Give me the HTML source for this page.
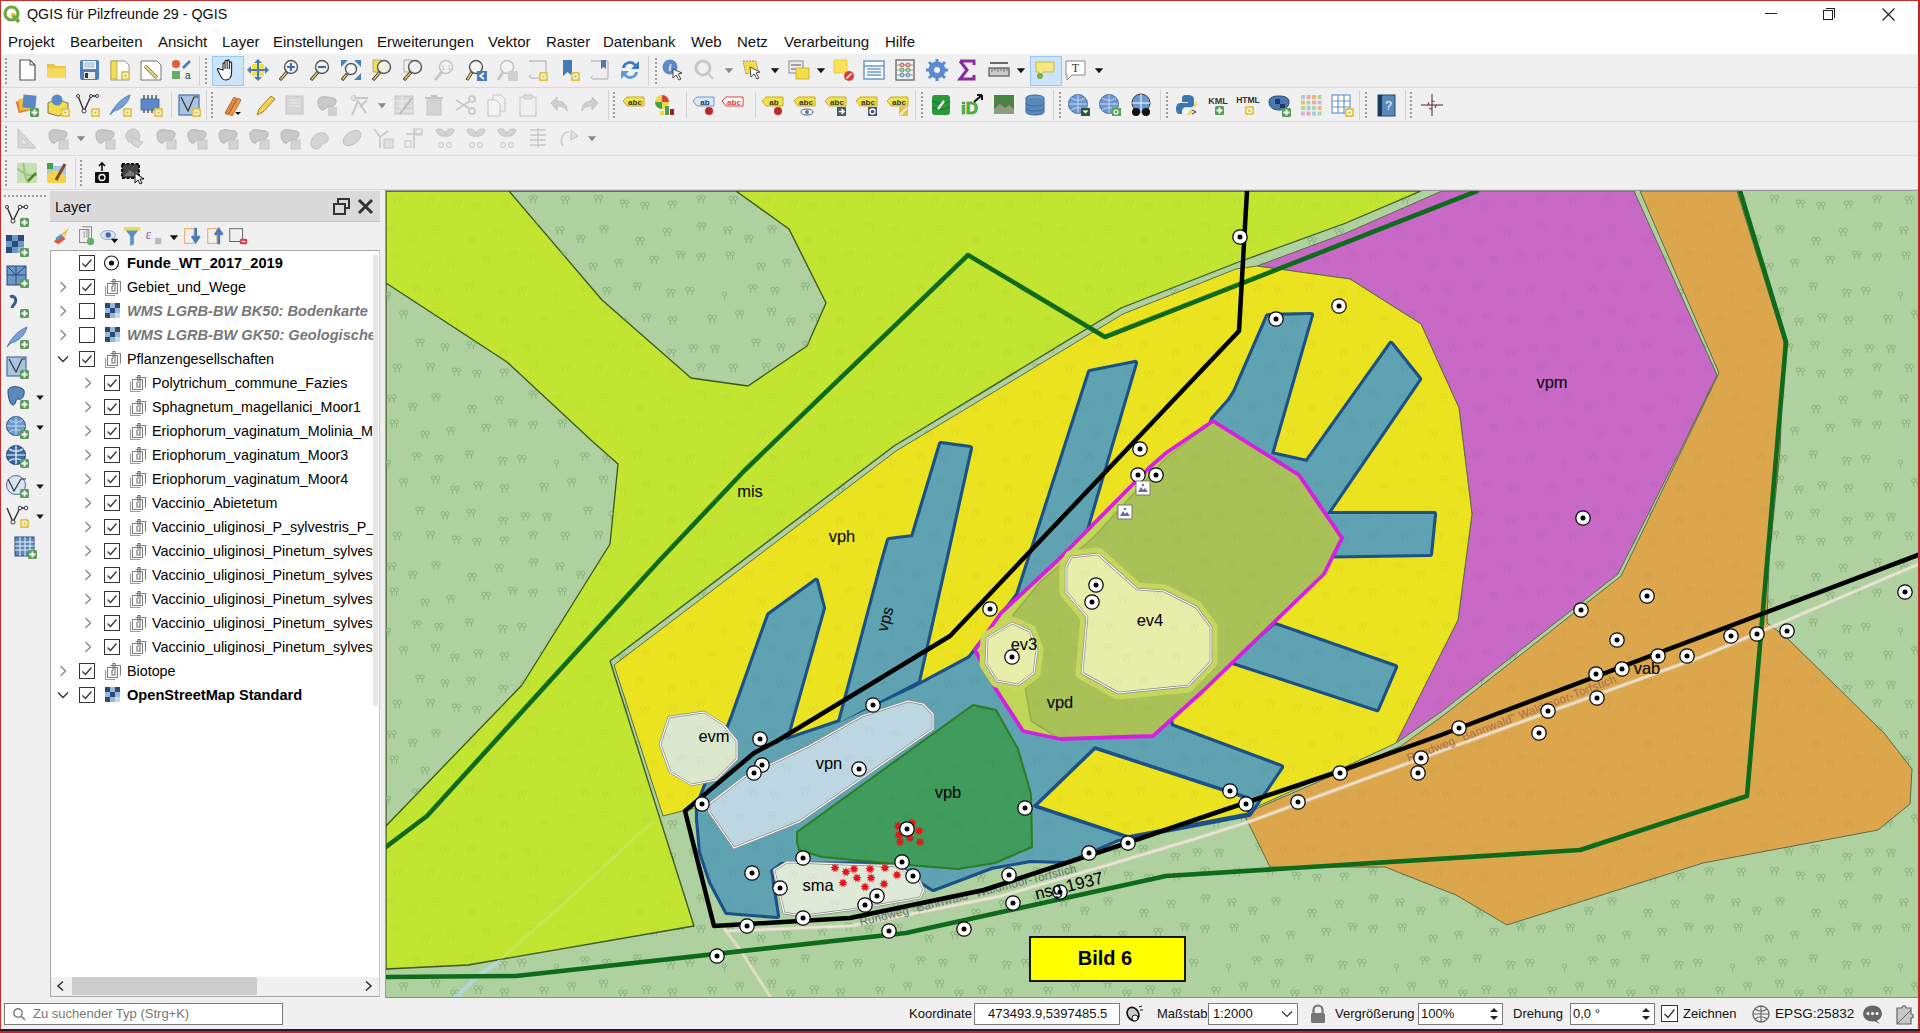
<!DOCTYPE html>
<html><head><meta charset="utf-8">
<style>
*{margin:0;padding:0;box-sizing:border-box}
html,body{width:1920px;height:1033px;overflow:hidden;background:#f0f0f0;font-family:"Liberation Sans",sans-serif;color:#000}
.a{position:absolute}
#title{left:0;top:0;width:1920px;height:28px;background:#fff;border-top:1px solid #c42b2b}
#menu{left:0;top:28px;width:1920px;height:26px;background:#fff}
#menu span{position:absolute;top:5px;font-size:15px;color:#111}
.tb{position:absolute;left:1px;width:1917px;background:#f0f0f0;border-bottom:1px solid #d9d9d9}
.grip{position:absolute;width:3px;border-left:2px dotted #a9a9a9}
.sep{position:absolute;width:1px;background:#d5d5d5}
.lt span{position:absolute;font-size:14.4px;white-space:nowrap}
#status span{position:absolute;font-size:13px;white-space:nowrap}
</style></head>
<body>
<!-- window borders -->
<div class="a" style="left:0;top:0;width:1px;height:1033px;background:#c9302c;z-index:50"></div>
<div class="a" style="left:1918px;top:0;width:2px;height:1033px;background:#b82828;z-index:50"></div>
<div class="a" style="left:0;top:0;width:1920px;height:1px;background:#c9302c;z-index:50"></div>
<div class="a" style="left:0;top:1029px;width:1920px;height:2px;background:#211c2e;z-index:50"></div>
<div class="a" style="left:0;top:1031px;width:1920px;height:2px;background:#c8202a;z-index:50"></div>

<div id="title" class="a">
  <svg class="a" style="left:3px;top:4px" width="18" height="19" viewBox="0 0 18 19">
    <circle cx="8.5" cy="8.5" r="6.5" fill="none" stroke="#6fa83b" stroke-width="3.2"/>
    <path d="M9 9 L16 17" stroke="#6fa83b" stroke-width="3.5"/>
    <circle cx="9.5" cy="9.5" r="1.8" fill="#f0c030"/>
  </svg>
  <div class="a" style="left:27px;top:5px;font-size:14.3px;color:#111">QGIS für Pilzfreunde 29 - QGIS</div>
  <div class="a" style="left:1765px;top:12px;width:12px;height:1px;background:#222"></div>
  <div class="a" style="left:1823px;top:9px;width:10px;height:10px;border:1px solid #222;background:#fff"></div>
  <div class="a" style="left:1826px;top:7px;width:9px;height:10px;border-top:1px solid #222;border-right:1px solid #222"></div>
  <svg class="a" style="left:1882px;top:7px" width="13" height="13"><path d="M0.5 0.5L12.5 12.5M12.5 0.5L0.5 12.5" stroke="#222" stroke-width="1.2"/></svg>
</div>

<div id="menu" class="a">
  <span style="left:8px">Projekt</span>
  <span style="left:70px">Bearbeiten</span>
  <span style="left:158px">Ansicht</span>
  <span style="left:222px">Layer</span>
  <span style="left:273px">Einstellungen</span>
  <span style="left:377px">Erweiterungen</span>
  <span style="left:488px">Vektor</span>
  <span style="left:546px">Raster</span>
  <span style="left:603px">Datenbank</span>
  <span style="left:691px">Web</span>
  <span style="left:737px">Netz</span>
  <span style="left:784px">Verarbeitung</span>
  <span style="left:885px">Hilfe</span>
</div>

<!-- toolbars -->
<div class="tb" style="top:54px;height:34px"></div>
<div class="tb" style="top:88px;height:34px"></div>
<div class="tb" style="top:122px;height:34px"></div>
<div class="tb" style="top:156px;height:34px"></div>
<div class="a" style="left:5px;top:58px;width:2px;height:26px;background:repeating-linear-gradient(to bottom,#9d9d9d 0 2px,transparent 2px 4px)"></div><svg class="a" style="left:15.0px;top:58.0px" width="24" height="24" viewBox="0 0 24 24" font-family="Liberation Sans"><path d="M5 2h10l5 5v15H5z" fill="#fff" stroke="#555" stroke-width="1.2"/><path d="M15 2v5h5" fill="none" stroke="#555" stroke-width="1"/></svg><svg class="a" style="left:45.0px;top:58.0px" width="24" height="24" viewBox="0 0 24 24" font-family="Liberation Sans"><path d="M2 6h7l2 2h10v12H2z" fill="#e8c64a"/><path d="M2 10h19l-1 10H2z" fill="#f6d95a"/></svg><svg class="a" style="left:77.0px;top:58.0px" width="24" height="24" viewBox="0 0 24 24" font-family="Liberation Sans"><rect x="3" y="2" width="19" height="20" rx="2" fill="#4f80b8"/><rect x="6" y="3" width="13" height="8" fill="#fff"/><path d="M7 5h11M7 7h11M7 9h11" stroke="#6b8fb8" stroke-width="0.8"/><rect x="7" y="14" width="11" height="7" fill="#e8e8e8"/><rect x="8" y="15" width="3" height="5" fill="#333"/></svg><svg class="a" style="left:108.0px;top:58.0px" width="24" height="24" viewBox="0 0 24 24" font-family="Liberation Sans"><path d="M3 3h14l4 4v15H3z" fill="#fff" stroke="#999" stroke-width="1"/><rect x="3" y="3" width="6" height="18" fill="#f2dc5a" stroke="#c9a92a" stroke-width="0.8"/><rect x="13" y="13" width="9" height="9" rx="1.5" fill="#e3c44a"/><circle cx="17.5" cy="17.5" r="2.2" fill="none" stroke="#fff" stroke-width="1.3"/></svg><svg class="a" style="left:139.0px;top:58.0px" width="24" height="24" viewBox="0 0 24 24" font-family="Liberation Sans"><path d="M2 3h16l4 4v15H2z" fill="#fff" stroke="#777" stroke-width="1"/><path d="M6 8l12 12" stroke="#7a6a3a" stroke-width="3.5"/><path d="M6 8l12 12" stroke="#e8d88a" stroke-width="2"/></svg><svg class="a" style="left:169.0px;top:58.0px" width="24" height="24" viewBox="0 0 24 24" font-family="Liberation Sans"><circle cx="7" cy="6" r="4" fill="#e06030"/><path d="M14 10l7-7" stroke="#4a7ab5" stroke-width="2.5"/><rect x="3" y="13" width="8" height="8" fill="#6aaa6a"/><text x="16" y="21" font-size="10" fill="#333" font-family="Liberation Sans">a</text></svg><div class="a" style="left:199px;top:56px;width:1px;height:30px;background:#d4d4d4"></div><div class="a" style="left:205px;top:58px;width:2px;height:26px;background:repeating-linear-gradient(to bottom,#9d9d9d 0 2px,transparent 2px 4px)"></div><div class="a" style="left:212px;top:56px;width:32px;height:30px;background:#cce4f7;border:1px solid #99c9ef"></div><svg class="a" style="left:216.0px;top:58.0px" width="24" height="24" viewBox="0 0 24 24" font-family="Liberation Sans"><path d="M7 12V6c0-1.5 2-1.5 2 0v5V3.5c0-1.5 2.2-1.5 2.2 0V11V3c0-1.5 2.2-1.5 2.2 0v8V5c0-1.5 2.2-1.5 2.2 0v9c0 5-2 8-6 8-3 0-4-2-6-6l-2-4c-.7-1.5 1-2 2-1z" fill="#fff" stroke="#222" stroke-width="1.1"/></svg><svg class="a" style="left:246.0px;top:58.0px" width="24" height="24" viewBox="0 0 24 24" font-family="Liberation Sans"><rect x="6" y="6" width="12" height="12" fill="#f2e04a"/><path d="M12 1l4 4H8zM12 23l4-4H8zM1 12l4 4V8zM23 12l-4 4V8z" fill="#4a7ab5"/><path d="M12 5v14M5 12h14" stroke="#4a7ab5" stroke-width="2"/></svg><svg class="a" style="left:277.0px;top:58.0px" width="24" height="24" viewBox="0 0 24 24" font-family="Liberation Sans"><path d="M3 22L10 14" stroke="#222" stroke-width="3.2"/><path d="M3.5 21.5L9.5 14.5" stroke="#e8d26a" stroke-width="1.6"/><circle cx="14" cy="9" r="6.5" fill="#f4f4f4" stroke="#555" stroke-width="1.4"/><path d="M14 5v8M10 9h8" stroke="#3a6fb0" stroke-width="2.2"/></svg><svg class="a" style="left:308.0px;top:58.0px" width="24" height="24" viewBox="0 0 24 24" font-family="Liberation Sans"><path d="M3 22L10 14" stroke="#222" stroke-width="3.2"/><path d="M3.5 21.5L9.5 14.5" stroke="#e8d26a" stroke-width="1.6"/><circle cx="14" cy="9" r="6.5" fill="#f4f4f4" stroke="#555" stroke-width="1.4"/><path d="M10 9h8" stroke="#3a6fb0" stroke-width="2.2"/></svg><svg class="a" style="left:339.0px;top:58.0px" width="24" height="24" viewBox="0 0 24 24" font-family="Liberation Sans"><path d="M2 2h7l-7 7zM22 2h-7l7 7zM22 22h-7l7-7z" fill="#4a80c0"/><path d="M3 22L8 16" stroke="#222" stroke-width="3.2"/><path d="M3.5 21.5L7.5 16.5" stroke="#e8d26a" stroke-width="1.6"/><circle cx="12" cy="11" r="5.5" fill="#f4f4f4" stroke="#555" stroke-width="1.4"/></svg><svg class="a" style="left:370.0px;top:58.0px" width="24" height="24" viewBox="0 0 24 24" font-family="Liberation Sans"><rect x="3" y="2" width="8" height="12" fill="#f2e04a" stroke="#999" stroke-width="0.8"/><path d="M3 22L10 14" stroke="#222" stroke-width="3.2"/><path d="M3.5 21.5L9.5 14.5" stroke="#e8d26a" stroke-width="1.6"/><circle cx="14" cy="9" r="6.5" fill="#f0f0e0" stroke="#555" stroke-width="1.4"/></svg><svg class="a" style="left:401.0px;top:58.0px" width="24" height="24" viewBox="0 0 24 24" font-family="Liberation Sans"><rect x="3" y="2" width="8" height="12" fill="#eee" stroke="#999" stroke-width="0.8"/><path d="M3 22L10 14" stroke="#222" stroke-width="3.2"/><path d="M3.5 21.5L9.5 14.5" stroke="#e8d26a" stroke-width="1.6"/><circle cx="14" cy="9" r="6.5" fill="#f0f0f0" stroke="#555" stroke-width="1.4"/></svg><svg class="a" style="left:432.0px;top:58.0px" width="24" height="24" viewBox="0 0 24 24" font-family="Liberation Sans"><path d="M3 22L10 14" stroke="#c8c8c8" stroke-width="3"/><circle cx="14" cy="9" r="6.5" fill="#f4f4f4" stroke="#c0c0c0" stroke-width="1.4"/><text x="14" y="12" font-size="7" fill="#bbb" text-anchor="middle" font-family="Liberation Sans">1:1</text></svg><svg class="a" style="left:464.0px;top:58.0px" width="24" height="24" viewBox="0 0 24 24" font-family="Liberation Sans"><path d="M3 22L8 14" stroke="#222" stroke-width="3.2"/><path d="M3.5 21.5L7.5 14.5" stroke="#e8d26a" stroke-width="1.6"/><circle cx="12" cy="9" r="6.5" fill="#f4f4f4" stroke="#555" stroke-width="1.4"/><rect x="13" y="13" width="10" height="10" fill="#4a7ab5"/><path d="M20 15l-4 3 4 3" fill="none" stroke="#fff" stroke-width="1.6"/></svg><svg class="a" style="left:495.0px;top:58.0px" width="24" height="24" viewBox="0 0 24 24" font-family="Liberation Sans"><path d="M3 22L8 14" stroke="#c8c8c8" stroke-width="3"/><circle cx="12" cy="9" r="6.5" fill="#f4f4f4" stroke="#c0c0c0" stroke-width="1.4"/><rect x="13" y="13" width="10" height="10" fill="#d0d0d0"/></svg><svg class="a" style="left:526.0px;top:58.0px" width="24" height="24" viewBox="0 0 24 24" font-family="Liberation Sans"><path d="M3 3h17v17H5c-2 0-2-3 0-3" fill="#eee" stroke="#aaa" stroke-width="1"/><rect x="13" y="14" width="9" height="9" rx="1.5" fill="#e3c44a"/><circle cx="17.5" cy="18.5" r="2.2" fill="none" stroke="#fff" stroke-width="1.3"/></svg><svg class="a" style="left:558.0px;top:58.0px" width="24" height="24" viewBox="0 0 24 24" font-family="Liberation Sans"><path d="M5 2h9v16l-4.5-4L5 18z" fill="#4a7ab5"/><rect x="13" y="14" width="9" height="9" rx="1.5" fill="#e3c44a"/><circle cx="17.5" cy="18.5" r="2.2" fill="none" stroke="#fff" stroke-width="1.3"/></svg><svg class="a" style="left:588.0px;top:58.0px" width="24" height="24" viewBox="0 0 24 24" font-family="Liberation Sans"><path d="M3 3h17v18H5c-2 0-2-3 0-3" fill="#eee" stroke="#aaa" stroke-width="1"/><path d="M13 2h5v9l-2.5-2-2.5 2z" fill="#4a7ab5"/></svg><svg class="a" style="left:618.0px;top:58.0px" width="24" height="24" viewBox="0 0 24 24" font-family="Liberation Sans"><path d="M4 10a8 8 0 0 1 14-4l3-3v8h-8l3-3a5 5 0 0 0-9 2z" fill="#3a7ac8"/><path d="M20 14a8 8 0 0 1-14 4l-3 3v-8h8l-3 3a5 5 0 0 0 9-2z" fill="#5a9ad8"/></svg><div class="a" style="left:648px;top:56px;width:1px;height:30px;background:#d4d4d4"></div><div class="a" style="left:655px;top:58px;width:2px;height:26px;background:repeating-linear-gradient(to bottom,#9d9d9d 0 2px,transparent 2px 4px)"></div><div class="a" style="left:1030px;top:56px;width:32px;height:30px;background:#cce4f7;border:1px solid #99c9ef"></div><svg class="a" style="left:661.0px;top:58.0px" width="24" height="24" viewBox="0 0 24 24" font-family="Liberation Sans"><circle cx="9" cy="9" r="7.5" fill="#5a8ac8"/><text x="9" y="13" font-size="10" font-style="italic" font-weight="bold" fill="#fff" text-anchor="middle" font-family="Liberation Serif">i</text><path d="M12 11l9 4-4 1 3 5-2 1-3-5-3 3z" fill="#fff" stroke="#333" stroke-width="0.9"/></svg><svg class="a" style="left:693.0px;top:58.0px" width="24" height="24" viewBox="0 0 24 24" font-family="Liberation Sans"><circle cx="10" cy="10" r="7" fill="none" stroke="#c8c8c8" stroke-width="3"/><path d="M14 14l6 7" stroke="#ccc" stroke-width="2"/></svg><svg class="a" style="left:740.0px;top:58.0px" width="24" height="24" viewBox="0 0 24 24" font-family="Liberation Sans"><path d="M3 3h13l2 10-12 3z" fill="#f2e04a" stroke="#777" stroke-width="0.8" stroke-dasharray="2 1"/><path d="M10 9l10 5-4 1 3 5-2 1-3-5-3 3z" fill="#fff" stroke="#333" stroke-width="0.9"/></svg><svg class="a" style="left:787.0px;top:58.0px" width="24" height="24" viewBox="0 0 24 24" font-family="Liberation Sans"><rect x="2" y="3" width="14" height="12" fill="#eee" stroke="#888" stroke-width="1"/><path d="M4 7h10M4 11h10" stroke="#888" stroke-width="1.5"/><rect x="9" y="10" width="13" height="11" fill="#f2e04a" stroke="#c9a92a" stroke-width="0.8"/></svg><svg class="a" style="left:831.0px;top:58.0px" width="24" height="24" viewBox="0 0 24 24" font-family="Liberation Sans"><rect x="3" y="2" width="13" height="13" fill="#f7e25a" stroke="#e6c63a" stroke-width="0.8"/><circle cx="18" cy="18" r="5" fill="#d84040"/><path d="M15.5 20.5l5-5" stroke="#fff" stroke-width="1.5"/></svg><svg class="a" style="left:862.0px;top:58.0px" width="24" height="24" viewBox="0 0 24 24" font-family="Liberation Sans"><rect x="2" y="3" width="20" height="18" fill="#fff" stroke="#6a9ad0" stroke-width="1.5"/><path d="M2 8h20M5 11h14M5 14h14M5 17h14" stroke="#6a9ad0" stroke-width="1.3"/></svg><svg class="a" style="left:893.0px;top:58.0px" width="24" height="24" viewBox="0 0 24 24" font-family="Liberation Sans"><rect x="3" y="2" width="18" height="20" fill="none" stroke="#666" stroke-width="1.3"/><path d="M3 7h18M3 12h18M3 17h18" stroke="#888" stroke-width="0.8"/><circle cx="9" cy="7" r="2" fill="none" stroke="#d04a4a"/><circle cx="15" cy="7" r="2" fill="none" stroke="#d04a4a"/><circle cx="9" cy="12" r="2" fill="none" stroke="#4aa04a"/><circle cx="15" cy="12" r="2" fill="none" stroke="#4aa04a"/><circle cx="9" cy="17" r="2" fill="none" stroke="#4a8ab0"/><circle cx="15" cy="17" r="2" fill="none" stroke="#4a8ab0"/></svg><svg class="a" style="left:925.0px;top:58.0px" width="24" height="24" viewBox="0 0 24 24" font-family="Liberation Sans"><circle cx="12" cy="12" r="6.5" fill="none" stroke="#5a8ad0" stroke-width="4"/><path d="M12 1v22M1 12h22M4 4l16 16M20 4L4 20" stroke="#5a8ad0" stroke-width="3"/><circle cx="12" cy="12" r="3" fill="#f0f0f0"/></svg><svg class="a" style="left:955.0px;top:58.0px" width="24" height="24" viewBox="0 0 24 24" font-family="Liberation Sans"><path d="M5 3h14v4M5 3l7 9-7 9h14v-4" fill="none" stroke="#8a2aa0" stroke-width="3"/></svg><svg class="a" style="left:987.0px;top:58.0px" width="24" height="24" viewBox="0 0 24 24" font-family="Liberation Sans"><path d="M3 5h18" stroke="#444" stroke-width="1.6"/><rect x="2" y="10" width="20" height="8" fill="#ccc" stroke="#555" stroke-width="1.2"/><path d="M5 10v4M8 10v3M11 10v4M14 10v3M17 10v4M20 10v3" stroke="#555" stroke-width="0.8"/></svg><svg class="a" style="left:1033.0px;top:58.0px" width="24" height="24" viewBox="0 0 24 24" font-family="Liberation Sans"><path d="M3 4h18v10H10l-4 4v-4H3z" fill="#f4e880" stroke="#c9b84a" stroke-width="1"/><circle cx="7" cy="18" r="3" fill="#7ab04a"/></svg><svg class="a" style="left:1064.0px;top:58.0px" width="24" height="24" viewBox="0 0 24 24" font-family="Liberation Sans"><path d="M2 3h19v14H8l-5 5v-5H2z" fill="#fff" stroke="#888" stroke-width="1"/><text x="11.5" y="14" font-size="12" fill="#333" text-anchor="middle" font-family="Liberation Serif">T</text></svg><svg class="a" style="left:719.0px;top:60.0px" width="20" height="20" viewBox="0 0 24 24" font-family="Liberation Sans"><path d="M7 10h10l-5 6z" fill="#888"/></svg><svg class="a" style="left:765.0px;top:60.0px" width="20" height="20" viewBox="0 0 24 24" font-family="Liberation Sans"><path d="M7 10h10l-5 6z" fill="#111"/></svg><svg class="a" style="left:811.0px;top:60.0px" width="20" height="20" viewBox="0 0 24 24" font-family="Liberation Sans"><path d="M7 10h10l-5 6z" fill="#111"/></svg><svg class="a" style="left:1011.0px;top:60.0px" width="20" height="20" viewBox="0 0 24 24" font-family="Liberation Sans"><path d="M7 10h10l-5 6z" fill="#111"/></svg><svg class="a" style="left:1089.0px;top:60.0px" width="20" height="20" viewBox="0 0 24 24" font-family="Liberation Sans"><path d="M7 10h10l-5 6z" fill="#111"/></svg><div class="a" style="left:5px;top:92px;width:2px;height:26px;background:repeating-linear-gradient(to bottom,#9d9d9d 0 2px,transparent 2px 4px)"></div><svg class="a" style="left:15.0px;top:93.0px" width="24" height="24" viewBox="0 0 24 24" font-family="Liberation Sans"><rect x="2" y="7" width="12" height="12" fill="#e08040" transform="rotate(-15 8 13)"/><rect x="4" y="5" width="12" height="12" fill="#f0c040" transform="rotate(-8 10 11)"/><rect x="8" y="2" width="13" height="13" fill="#5a88c8" transform="rotate(5 14 8)"/><rect x="15" y="15" width="9" height="9" rx="1.5" fill="#5a9a5a"/><path d="M19.5 16.5v6M16.5 19.5h6" stroke="#fff" stroke-width="1.8"/></svg><svg class="a" style="left:46.0px;top:93.0px" width="24" height="24" viewBox="0 0 24 24" font-family="Liberation Sans"><path d="M2 10l8-4 12 4v10l-10 3-10-3z" fill="#f2dc4a" stroke="#555" stroke-width="0.8"/><circle cx="11" cy="7" r="5.5" fill="#5a88c8"/><rect x="15" y="15" width="9" height="9" rx="1.5" fill="#e3c44a"/><circle cx="19.5" cy="19.5" r="2.2" fill="none" stroke="#fff" stroke-width="1.3"/></svg><svg class="a" style="left:76.0px;top:93.0px" width="24" height="24" viewBox="0 0 24 24" font-family="Liberation Sans"><path d="M2 3l6 15 7-15h6" fill="none" stroke="#333" stroke-width="1.4"/><circle cx="8" cy="18" r="2" fill="#fff" stroke="#333"/><circle cx="2" cy="3" r="1.5" fill="#fff" stroke="#333"/><circle cx="15" cy="3" r="1.5" fill="#fff" stroke="#333"/><circle cx="21" cy="3" r="1.5" fill="#fff" stroke="#333"/><rect x="15" y="15" width="9" height="9" rx="1.5" fill="#e3c44a"/><circle cx="19.5" cy="19.5" r="2.2" fill="none" stroke="#fff" stroke-width="1.3"/></svg><svg class="a" style="left:108.0px;top:93.0px" width="24" height="24" viewBox="0 0 24 24" font-family="Liberation Sans"><path d="M2 22C6 14 12 6 22 2c-2 8-8 14-16 16z" fill="#7aa0d8" stroke="#4a70a8" stroke-width="0.9"/><rect x="15" y="15" width="9" height="9" rx="1.5" fill="#e3c44a"/><circle cx="19.5" cy="19.5" r="2.2" fill="none" stroke="#fff" stroke-width="1.3"/></svg><svg class="a" style="left:139.0px;top:93.0px" width="24" height="24" viewBox="0 0 24 24" font-family="Liberation Sans"><rect x="2" y="6" width="18" height="11" fill="#5a88c8" stroke="#3a68a8" stroke-width="0.8"/><path d="M5 2v4M9 2v4M13 2v4M17 2v4M5 17v3M9 17v3M13 17v3M17 17v3" stroke="#333" stroke-width="1.2"/><rect x="15" y="15" width="9" height="9" rx="1.5" fill="#e3c44a"/><circle cx="19.5" cy="19.5" r="2.2" fill="none" stroke="#fff" stroke-width="1.3"/></svg><svg class="a" style="left:177.0px;top:93.0px" width="24" height="24" viewBox="0 0 24 24" font-family="Liberation Sans"><rect x="2" y="2" width="20" height="20" fill="#a8c4e0" stroke="#4a70a8" stroke-width="1.2"/><path d="M4 4l7 14 6-14h4" fill="none" stroke="#333" stroke-width="1.2"/><rect x="15" y="15" width="9" height="9" rx="1.5" fill="#e3c44a"/><circle cx="19.5" cy="19.5" r="2.2" fill="none" stroke="#fff" stroke-width="1.3"/></svg><div class="a" style="left:171px;top:92px;width:1px;height:26px;background:#d4d4d4"></div><div class="a" style="left:206px;top:90px;width:1px;height:30px;background:#d4d4d4"></div><div class="a" style="left:211px;top:92px;width:2px;height:26px;background:repeating-linear-gradient(to bottom,#9d9d9d 0 2px,transparent 2px 4px)"></div><svg class="a" style="left:221.0px;top:93.0px" width="24" height="24" viewBox="0 0 24 24" font-family="Liberation Sans"><path d="M4 20l9-16 3 2-9 16z" fill="#e08a40" stroke="#a05a20" stroke-width="0.8"/><path d="M8 21l9-16 3 2-9 16z" fill="#f09a50" stroke="#a05a20" stroke-width="0.8"/><path d="M14 19h6l-3 3z" fill="#111"/></svg><svg class="a" style="left:253.0px;top:93.0px" width="24" height="24" viewBox="0 0 24 24" font-family="Liberation Sans"><path d="M4 22l2-6 12-13 4 3-12 13z" fill="#f2d44a" stroke="#8a7a3a" stroke-width="0.9"/></svg><svg class="a" style="left:283.0px;top:93.0px" width="24" height="24" viewBox="0 0 24 24" font-family="Liberation Sans"><rect x="3" y="3" width="17" height="18" fill="#d6d6d6" stroke="#c4c4c4"/><path d="M6 7h11M6 10h11M6 13h11" stroke="#e8e8e8"/></svg><svg class="a" style="left:315.0px;top:93.0px" width="24" height="24" viewBox="0 0 24 24" font-family="Liberation Sans"><path d="M3 8c0-4 5-5 9-4s9 0 9 4-3 6-7 6-4 4-7 3-4-5-4-9z" fill="#c9c9c9" stroke="#b4b4b4" stroke-width="1"/><rect x="13" y="14" width="9" height="9" fill="#d0d0d0"/></svg><svg class="a" style="left:348.0px;top:93.0px" width="24" height="24" viewBox="0 0 24 24" font-family="Liberation Sans"><circle cx="6" cy="5" r="2.5" fill="none" stroke="#c4c4c4"/><path d="M6 5h14M4 22l6-14 8 12M12 14l7-7" fill="none" stroke="#c8c8c8" stroke-width="2"/></svg><svg class="a" style="left:392.0px;top:93.0px" width="24" height="24" viewBox="0 0 24 24" font-family="Liberation Sans"><rect x="3" y="3" width="18" height="18" fill="#d8d8d8" stroke="#c4c4c4"/><path d="M3 8h18M3 13h18M3 18h18M10 3v18" stroke="#eee"/><path d="M8 21l12-16" stroke="#bbb" stroke-width="2"/></svg><svg class="a" style="left:422.0px;top:93.0px" width="24" height="24" viewBox="0 0 24 24" font-family="Liberation Sans"><rect x="5" y="7" width="14" height="15" fill="#d4d4d4" stroke="#c4c4c4"/><path d="M3 5h18M9 3h6" stroke="#c4c4c4" stroke-width="2"/></svg><svg class="a" style="left:454.0px;top:93.0px" width="24" height="24" viewBox="0 0 24 24" font-family="Liberation Sans"><circle cx="18" cy="6" r="3" fill="none" stroke="#c4c4c4" stroke-width="1.6"/><circle cx="18" cy="18" r="3" fill="none" stroke="#c4c4c4" stroke-width="1.6"/><path d="M2 7l14 9M2 17l14-9" stroke="#c8c8c8" stroke-width="1.6"/></svg><svg class="a" style="left:485.0px;top:93.0px" width="24" height="24" viewBox="0 0 24 24" font-family="Liberation Sans"><path d="M8 2h8l4 4v12H8z" fill="#f0f0f0" stroke="#c4c4c4"/><path d="M3 7h8l4 4v12H3z" fill="#f4f4f4" stroke="#c4c4c4"/></svg><svg class="a" style="left:516.0px;top:93.0px" width="24" height="24" viewBox="0 0 24 24" font-family="Liberation Sans"><rect x="4" y="4" width="16" height="19" fill="#f0f0f0" stroke="#c4c4c4"/><rect x="8" y="2" width="8" height="4" fill="#ddd" stroke="#c4c4c4"/></svg><svg class="a" style="left:547.0px;top:93.0px" width="24" height="24" viewBox="0 0 24 24" font-family="Liberation Sans"><path d="M4 10l6-6v4c7 0 10 4 10 10-2-4-5-5-10-5v4z" fill="#d0d0d0" stroke="#c0c0c0"/></svg><svg class="a" style="left:578.0px;top:93.0px" width="24" height="24" viewBox="0 0 24 24" font-family="Liberation Sans"><path d="M20 10l-6-6v4c-7 0-10 4-10 10 2-4 5-5 10-5v4z" fill="#d0d0d0" stroke="#c0c0c0"/></svg><svg class="a" style="left:372.0px;top:95.0px" width="20" height="20" viewBox="0 0 24 24" font-family="Liberation Sans"><path d="M7 10h10l-5 6z" fill="#888"/></svg><div class="a" style="left:608px;top:90px;width:1px;height:30px;background:#d4d4d4"></div><div class="a" style="left:613px;top:92px;width:2px;height:26px;background:repeating-linear-gradient(to bottom,#9d9d9d 0 2px,transparent 2px 4px)"></div><svg class="a" style="left:622.0px;top:93.0px" width="24" height="24" viewBox="0 0 24 24" font-family="Liberation Sans"><path d="M1 8l4-4h17v9H5z" fill="#f2e24a" stroke="#c9a92a" stroke-width="1"/><text x="13" y="11.5" font-size="8" font-weight="bold" text-anchor="middle" fill="#333" font-family="Liberation Sans">abc</text></svg><svg class="a" style="left:653.0px;top:93.0px" width="24" height="24" viewBox="0 0 24 24" font-family="Liberation Sans"><circle cx="9" cy="9" r="7" fill="#f2d44a"/><path d="M9 9V2a7 7 0 0 1 7 7z" fill="#d84040"/><path d="M9 9H2a7 7 0 0 0 7 7z" fill="#4aa04a"/><rect x="12" y="13" width="4" height="9" fill="#4aa04a"/><rect x="17" y="16" width="4" height="6" fill="#a02020"/><rect x="7" y="18" width="4" height="4" fill="#f2d44a"/></svg><svg class="a" style="left:692.0px;top:93.0px" width="24" height="24" viewBox="0 0 24 24" font-family="Liberation Sans"><path d="M1 8l4-4h17v9H5z" fill="#d8e8f8" stroke="#6a9ad0" stroke-width="1"/><text x="13" y="11.5" font-size="8" font-weight="bold" text-anchor="middle" fill="#333" font-family="Liberation Sans">ab</text><circle cx="17" cy="18" r="4" fill="#c02828"/></svg><svg class="a" style="left:721.0px;top:93.0px" width="24" height="24" viewBox="0 0 24 24" font-family="Liberation Sans"><path d="M1 8l4-4h17v9H5z" fill="#fff" stroke="#d84040" stroke-width="1"/><text x="13" y="11.5" font-size="8" font-weight="bold" text-anchor="middle" fill="#d84040" font-family="Liberation Sans">abc</text></svg><svg class="a" style="left:761.0px;top:93.0px" width="24" height="24" viewBox="0 0 24 24" font-family="Liberation Sans"><path d="M1 8l4-4h17v9H5z" fill="#f2e24a" stroke="#c9a92a" stroke-width="1"/><text x="13" y="11.5" font-size="8" font-weight="bold" text-anchor="middle" fill="#333" font-family="Liberation Sans">ab</text><circle cx="17" cy="18" r="4" fill="#c02828"/></svg><svg class="a" style="left:793.0px;top:93.0px" width="24" height="24" viewBox="0 0 24 24" font-family="Liberation Sans"><path d="M1 8l4-4h17v9H5z" fill="#f2e24a" stroke="#c9a92a" stroke-width="1"/><text x="13" y="11.5" font-size="8" font-weight="bold" text-anchor="middle" fill="#333" font-family="Liberation Sans">abc</text><ellipse cx="14" cy="19" rx="6" ry="3" fill="#fff" stroke="#333" stroke-width="0.8"/><circle cx="14" cy="19" r="2" fill="#4a7ab5"/></svg><svg class="a" style="left:824.0px;top:93.0px" width="24" height="24" viewBox="0 0 24 24" font-family="Liberation Sans"><path d="M1 8l4-4h17v9H5z" fill="#f2e24a" stroke="#c9a92a" stroke-width="1"/><text x="13" y="11.5" font-size="8" font-weight="bold" text-anchor="middle" fill="#333" font-family="Liberation Sans">abc</text><rect x="13" y="14" width="9" height="9" fill="#4a5a6a"/><path d="M15 18.5h4M17.5 16l2.5 2.5-2.5 2.5" stroke="#fff" stroke-width="1.5" fill="none"/></svg><svg class="a" style="left:855.0px;top:93.0px" width="24" height="24" viewBox="0 0 24 24" font-family="Liberation Sans"><path d="M1 8l4-4h17v9H5z" fill="#f2e24a" stroke="#c9a92a" stroke-width="1"/><text x="13" y="11.5" font-size="8" font-weight="bold" text-anchor="middle" fill="#333" font-family="Liberation Sans">abc</text><rect x="13" y="14" width="9" height="9" fill="#4a5a6a"/><circle cx="17.5" cy="18.5" r="2.5" fill="none" stroke="#fff" stroke-width="1.3"/></svg><svg class="a" style="left:886.0px;top:93.0px" width="24" height="24" viewBox="0 0 24 24" font-family="Liberation Sans"><path d="M1 8l4-4h17v9H5z" fill="#f2e24a" stroke="#c9a92a" stroke-width="1"/><text x="13" y="11.5" font-size="8" font-weight="bold" text-anchor="middle" fill="#333" font-family="Liberation Sans">abc</text><rect x="13" y="14" width="9" height="9" fill="#e3c44a"/><path d="M14 22l7-7" stroke="#fff" stroke-width="1.5"/></svg><div class="a" style="left:686px;top:92px;width:1px;height:26px;background:#d4d4d4"></div><div class="a" style="left:755px;top:92px;width:1px;height:26px;background:#d4d4d4"></div><div class="a" style="left:915px;top:90px;width:1px;height:30px;background:#d4d4d4"></div><div class="a" style="left:921px;top:92px;width:2px;height:26px;background:repeating-linear-gradient(to bottom,#9d9d9d 0 2px,transparent 2px 4px)"></div><svg class="a" style="left:929.0px;top:93.0px" width="24" height="24" viewBox="0 0 24 24" font-family="Liberation Sans"><rect x="3" y="2" width="18" height="20" rx="3" fill="#2a9a3a"/><path d="M3 8c6 3 12 3 18 0M3 14c6 3 12 3 18 0" stroke="#1a6a2a" fill="none"/><path d="M9 16l6-8" stroke="#fff" stroke-width="2.2"/></svg><svg class="a" style="left:960.0px;top:93.0px" width="24" height="24" viewBox="0 0 24 24" font-family="Liberation Sans"><text x="1" y="21" font-size="17" font-weight="bold" fill="#4ac040" font-family="Liberation Sans" stroke="#2a8a2a" stroke-width="0.6">iD</text><path d="M14 9l8-7M22 2v5M22 2h-5" stroke="#111" stroke-width="2"/></svg><svg class="a" style="left:992.0px;top:93.0px" width="24" height="24" viewBox="0 0 24 24" font-family="Liberation Sans"><rect x="2" y="4" width="20" height="17" fill="#5a7a4a"/><path d="M2 8h20" stroke="#2a9a3a" stroke-width="1.5"/><path d="M2 16l6-5 5 4 4-3 5 4v5H2z" fill="#8aa07a"/><rect x="2" y="2" width="20" height="2" fill="#3a8a3a"/></svg><svg class="a" style="left:1023.0px;top:93.0px" width="24" height="24" viewBox="0 0 24 24" font-family="Liberation Sans"><ellipse cx="12" cy="5" rx="9" ry="3" fill="#6a98c8" stroke="#3a68a8"/><path d="M3 5v14c0 4 18 4 18 0V5" fill="#5a88b8" stroke="#3a68a8"/><path d="M3 10c0 4 18 4 18 0M3 15c0 4 18 4 18 0" fill="none" stroke="#3a68a8"/></svg><div class="a" style="left:1053px;top:90px;width:1px;height:30px;background:#d4d4d4"></div><div class="a" style="left:1059px;top:92px;width:2px;height:26px;background:repeating-linear-gradient(to bottom,#9d9d9d 0 2px,transparent 2px 4px)"></div><svg class="a" style="left:1067.0px;top:93.0px" width="24" height="24" viewBox="0 0 24 24" font-family="Liberation Sans"><circle cx="11" cy="11" r="9.5" fill="#6a98d0" stroke="#4a6a98"/><path d="M1.5 11h19M11 1.5v19M4 5c4 3 10 3 14 0M4 17c4-3 10-3 14 0" stroke="#c8d8f0" stroke-width="1" fill="none"/><rect x="14" y="15" width="9" height="8" fill="#2a5a3a"/><path d="M15.5 17.5h6l-3 3z" fill="#fff"/></svg><svg class="a" style="left:1098.0px;top:93.0px" width="24" height="24" viewBox="0 0 24 24" font-family="Liberation Sans"><circle cx="11" cy="11" r="9.5" fill="#6a98d0" stroke="#4a6a98"/><path d="M1.5 11h19M11 1.5v19M4 5c4 3 10 3 14 0M4 17c4-3 10-3 14 0" stroke="#c8d8f0" stroke-width="1" fill="none"/><rect x="14" y="15" width="9" height="8" fill="#5aa05a"/><circle cx="18" cy="19" r="2" fill="none" stroke="#fff" stroke-width="1.2"/></svg><svg class="a" style="left:1129.0px;top:93.0px" width="24" height="24" viewBox="0 0 24 24" font-family="Liberation Sans"><circle cx="12" cy="10" r="9" fill="#6a98d0" stroke="#333"/><path d="M3 10h18M12 1v18" stroke="#fff" stroke-width="1"/><circle cx="7" cy="19" r="4" fill="#111"/><circle cx="17" cy="19" r="4" fill="#111"/></svg><div class="a" style="left:1160px;top:90px;width:1px;height:30px;background:#d4d4d4"></div><div class="a" style="left:1166px;top:92px;width:2px;height:26px;background:repeating-linear-gradient(to bottom,#9d9d9d 0 2px,transparent 2px 4px)"></div><svg class="a" style="left:1175.0px;top:93.0px" width="24" height="24" viewBox="0 0 24 24" font-family="Liberation Sans"><path d="M12 2c-5 0-5 2-5 4v3h6v1H5c-3 0-4 3-4 6s1 5 4 5h2v-3c0-2 2-4 4-4h5c2 0 3-1 3-3V6c0-2-2-4-7-4z" fill="#3a78b0"/><path d="M12 22c5 0 5-2 5-4v-3h-6v-1h8c3 0 3-3 3-6" fill="#f2d44a"/><path d="M17 17l4 2-4 2" fill="none" stroke="#333" stroke-width="1"/></svg><svg class="a" style="left:1206.0px;top:93.0px" width="24" height="24" viewBox="0 0 24 24" font-family="Liberation Sans"><text x="12" y="11" font-size="9" font-weight="bold" fill="#333" text-anchor="middle" font-family="Liberation Sans">KML</text><rect x="9" y="13" width="9" height="9" rx="1.5" fill="#5a9a5a"/><path d="M13.5 14.5v6M10.5 17.5h6" stroke="#fff" stroke-width="1.8"/></svg><svg class="a" style="left:1236.0px;top:93.0px" width="24" height="24" viewBox="0 0 24 24" font-family="Liberation Sans"><text x="12" y="10" font-size="8.5" font-weight="bold" fill="#333" text-anchor="middle" font-family="Liberation Sans">HTML</text><rect x="9" y="13" width="9" height="9" rx="1.5" fill="#e3c44a"/><circle cx="13.5" cy="17.5" r="2.2" fill="none" stroke="#fff" stroke-width="1.3"/></svg><svg class="a" style="left:1267.0px;top:93.0px" width="24" height="24" viewBox="0 0 24 24" font-family="Liberation Sans"><path d="M2 9c0-5 5-6 10-6s10 1 10 6-4 8-10 8-10-3-10-8z" fill="#4a78b0" stroke="#2a4a78"/><rect x="8" y="6" width="5" height="5" fill="#1a3a68"/><rect x="13" y="11" width="5" height="4" fill="#1a3a68"/><rect x="15" y="15" width="9" height="9" rx="1.5" fill="#5a9a5a"/><path d="M19.5 16.5v6M16.5 19.5h6" stroke="#fff" stroke-width="1.8"/></svg><svg class="a" style="left:1299.0px;top:93.0px" width="24" height="24" viewBox="0 0 24 24" font-family="Liberation Sans"><rect x="2.0" y="2.0" width="4" height="4" fill="#a8c8e8"/><rect x="7.5" y="2.0" width="4" height="4" fill="#e8a8a8"/><rect x="13.0" y="2.0" width="4" height="4" fill="#f0b878"/><rect x="18.5" y="2.0" width="4" height="4" fill="#b8d888"/><rect x="2.0" y="7.5" width="4" height="4" fill="#f0b878"/><rect x="7.5" y="7.5" width="4" height="4" fill="#a8d8a8"/><rect x="13.0" y="7.5" width="4" height="4" fill="#e8a8a8"/><rect x="18.5" y="7.5" width="4" height="4" fill="#c8b8e8"/><rect x="2.0" y="13.0" width="4" height="4" fill="#b8d888"/><rect x="7.5" y="13.0" width="4" height="4" fill="#a8c8e8"/><rect x="13.0" y="13.0" width="4" height="4" fill="#a8d8a8"/><rect x="18.5" y="13.0" width="4" height="4" fill="#f0b878"/><rect x="2.0" y="18.5" width="4" height="4" fill="#c8b8e8"/><rect x="7.5" y="18.5" width="4" height="4" fill="#e8a8a8"/><rect x="13.0" y="18.5" width="4" height="4" fill="#a8c8e8"/><rect x="18.5" y="18.5" width="4" height="4" fill="#a8d8a8"/></svg><svg class="a" style="left:1330.0px;top:93.0px" width="24" height="24" viewBox="0 0 24 24" font-family="Liberation Sans"><rect x="2" y="2" width="18" height="18" fill="#fff" stroke="#6a98d0" stroke-width="1.2"/><path d="M8 2v18M14 2v18M2 8h18M2 14h18" stroke="#6a98d0" stroke-width="1.2"/><rect x="15" y="15" width="9" height="9" rx="1.5" fill="#e3c44a"/><circle cx="19.5" cy="19.5" r="2.2" fill="none" stroke="#fff" stroke-width="1.3"/></svg><div class="a" style="left:1359px;top:90px;width:1px;height:30px;background:#d4d4d4"></div><div class="a" style="left:1365px;top:92px;width:2px;height:26px;background:repeating-linear-gradient(to bottom,#9d9d9d 0 2px,transparent 2px 4px)"></div><svg class="a" style="left:1374.0px;top:93.0px" width="24" height="24" viewBox="0 0 24 24" font-family="Liberation Sans"><rect x="4" y="2" width="17" height="21" fill="#5a88b8" stroke="#2a4a6a"/><rect x="4" y="2" width="4" height="21" fill="#1a3a5a"/><text x="14.5" y="17" font-size="12" fill="#fff" text-anchor="middle" font-family="Liberation Sans">?</text></svg><div class="a" style="left:1405px;top:90px;width:1px;height:30px;background:#d4d4d4"></div><div class="a" style="left:1410px;top:92px;width:2px;height:26px;background:repeating-linear-gradient(to bottom,#9d9d9d 0 2px,transparent 2px 4px)"></div><svg class="a" style="left:1420.0px;top:93.0px" width="24" height="24" viewBox="0 0 24 24" font-family="Liberation Sans"><path d="M12 1v22M1 12h22" stroke="#333" stroke-width="1"/><circle cx="12" cy="12" r="4" fill="none" stroke="#c02828" stroke-width="1.2" stroke-dasharray="3 3"/></svg><div class="a" style="left:5px;top:126px;width:2px;height:26px;background:repeating-linear-gradient(to bottom,#9d9d9d 0 2px,transparent 2px 4px)"></div><svg class="a" style="left:15.0px;top:126.0px" width="24" height="24" viewBox="0 0 24 24" font-family="Liberation Sans"><path d="M3 22V3l18 19z" fill="#d8d8d8" stroke="#c0c0c0"/><path d="M7 18v-6l6 6z" fill="#eee" stroke="#c8c8c8"/></svg><svg class="a" style="left:46.0px;top:126.0px" width="24" height="24" viewBox="0 0 24 24" font-family="Liberation Sans"><path d="M3 8c0-4 5-5 9-4s9 0 9 4-3 6-7 6-4 4-7 3-4-5-4-9z" fill="#c9c9c9" stroke="#b4b4b4" stroke-width="1"/><rect x="13" y="14" width="9" height="9" fill="#d4d4d4" stroke="#c4c4c4"/></svg><svg class="a" style="left:93.0px;top:126.0px" width="24" height="24" viewBox="0 0 24 24" font-family="Liberation Sans"><path d="M3 8c0-4 5-5 9-4s9 0 9 4-3 6-7 6-4 4-7 3-4-5-4-9z" fill="#c9c9c9" stroke="#b4b4b4" stroke-width="1"/><rect x="13" y="14" width="9" height="9" fill="#d4d4d4" stroke="#c4c4c4"/></svg><svg class="a" style="left:123.0px;top:126.0px" width="24" height="24" viewBox="0 0 24 24" font-family="Liberation Sans"><circle cx="10" cy="10" r="7" fill="#d0d0d0" stroke="#c0c0c0"/><path d="M10 12l10 4-5 6-6-4z" fill="#d8d8d8" stroke="#c4c4c4"/></svg><svg class="a" style="left:154.0px;top:126.0px" width="24" height="24" viewBox="0 0 24 24" font-family="Liberation Sans"><path d="M3 8c0-4 5-5 9-4s9 0 9 4-3 6-7 6-4 4-7 3-4-5-4-9z" fill="#c9c9c9" stroke="#b4b4b4" stroke-width="1"/><rect x="13" y="14" width="9" height="9" fill="#d4d4d4" stroke="#c4c4c4"/></svg><svg class="a" style="left:185.0px;top:126.0px" width="24" height="24" viewBox="0 0 24 24" font-family="Liberation Sans"><path d="M3 8c0-4 5-5 9-4s9 0 9 4-3 6-7 6-4 4-7 3-4-5-4-9z" fill="#c9c9c9" stroke="#b4b4b4" stroke-width="1"/><rect x="13" y="14" width="9" height="9" fill="#d4d4d4" stroke="#c4c4c4"/></svg><svg class="a" style="left:216.0px;top:126.0px" width="24" height="24" viewBox="0 0 24 24" font-family="Liberation Sans"><path d="M3 8c0-4 5-5 9-4s9 0 9 4-3 6-7 6-4 4-7 3-4-5-4-9z" fill="#c9c9c9" stroke="#b4b4b4" stroke-width="1"/><rect x="13" y="14" width="9" height="9" fill="#d4d4d4" stroke="#c4c4c4"/></svg><svg class="a" style="left:247.0px;top:126.0px" width="24" height="24" viewBox="0 0 24 24" font-family="Liberation Sans"><path d="M3 8c0-4 5-5 9-4s9 0 9 4-3 6-7 6-4 4-7 3-4-5-4-9z" fill="#c9c9c9" stroke="#b4b4b4" stroke-width="1"/><rect x="13" y="14" width="9" height="9" fill="#d4d4d4" stroke="#c4c4c4"/></svg><svg class="a" style="left:278.0px;top:126.0px" width="24" height="24" viewBox="0 0 24 24" font-family="Liberation Sans"><path d="M3 8c0-4 5-5 9-4s9 0 9 4-3 6-7 6-4 4-7 3-4-5-4-9z" fill="#c9c9c9" stroke="#b4b4b4" stroke-width="1"/><rect x="13" y="14" width="9" height="9" fill="#d4d4d4" stroke="#c4c4c4"/></svg><svg class="a" style="left:308.0px;top:126.0px" width="24" height="24" viewBox="0 0 24 24" font-family="Liberation Sans"><path d="M3 18c0-6 4-10 9-11s9 2 8 7-6 2-7 6-10 4-10-2z" fill="#d4d4d4" stroke="#c0c0c0"/></svg><svg class="a" style="left:340.0px;top:126.0px" width="24" height="24" viewBox="0 0 24 24" font-family="Liberation Sans"><ellipse cx="12" cy="12" rx="10" ry="6" fill="#d4d4d4" stroke="#c0c0c0" transform="rotate(-35 12 12)"/></svg><svg class="a" style="left:371.0px;top:126.0px" width="24" height="24" viewBox="0 0 24 24" font-family="Liberation Sans"><path d="M3 3l6 8 8-6M9 11v11" stroke="#c8c8c8" stroke-width="1.6" fill="none"/><rect x="13" y="13" width="9" height="9" fill="#e0e0e0" stroke="#c4c4c4"/></svg><svg class="a" style="left:402.0px;top:126.0px" width="24" height="24" viewBox="0 0 24 24" font-family="Liberation Sans"><path d="M12 2v20M4 8h16" stroke="#c8c8c8" stroke-width="1.6"/><rect x="14" y="3" width="6" height="6" fill="none" stroke="#c4c4c4"/><rect x="3" y="15" width="6" height="6" fill="none" stroke="#c4c4c4"/></svg><svg class="a" style="left:433.0px;top:126.0px" width="24" height="24" viewBox="0 0 24 24" font-family="Liberation Sans"><path d="M3 4c3-2 8-1 9 4 1-5 6-6 9-4-1 5-6 7-9 6-3 1-8-1-9-6z" fill="#d4d4d4" stroke="#c0c0c0"/><circle cx="8" cy="19" r="2.5" fill="none" stroke="#c4c4c4"/><circle cx="16" cy="19" r="2.5" fill="none" stroke="#c4c4c4"/></svg><svg class="a" style="left:464.0px;top:126.0px" width="24" height="24" viewBox="0 0 24 24" font-family="Liberation Sans"><path d="M3 4c3-2 8-1 9 4 1-5 6-6 9-4-1 5-6 7-9 6-3 1-8-1-9-6z" fill="#d4d4d4" stroke="#c0c0c0"/><circle cx="8" cy="19" r="2.5" fill="none" stroke="#c4c4c4"/><circle cx="16" cy="19" r="2.5" fill="none" stroke="#c4c4c4"/></svg><svg class="a" style="left:495.0px;top:126.0px" width="24" height="24" viewBox="0 0 24 24" font-family="Liberation Sans"><path d="M3 4c3-2 8-1 9 4 1-5 6-6 9-4-1 5-6 7-9 6-3 1-8-1-9-6z" fill="#d4d4d4" stroke="#c0c0c0"/><circle cx="8" cy="19" r="2.5" fill="none" stroke="#c4c4c4"/><circle cx="16" cy="19" r="2.5" fill="none" stroke="#c4c4c4"/></svg><svg class="a" style="left:526.0px;top:126.0px" width="24" height="24" viewBox="0 0 24 24" font-family="Liberation Sans"><path d="M4 4h16M4 9h16M4 14h16M4 19h16M12 2v20" stroke="#c8c8c8" stroke-width="1.3"/></svg><svg class="a" style="left:557.0px;top:126.0px" width="24" height="24" viewBox="0 0 24 24" font-family="Liberation Sans"><path d="M6 20c-4-6 0-14 6-14" fill="none" stroke="#c8c8c8" stroke-width="1.5"/><path d="M14 4l7 6-7 4z" fill="#e0e0e0" stroke="#c4c4c4"/></svg><svg class="a" style="left:71.0px;top:128.0px" width="20" height="20" viewBox="0 0 24 24" font-family="Liberation Sans"><path d="M7 10h10l-5 6z" fill="#888"/></svg><svg class="a" style="left:582.0px;top:128.0px" width="20" height="20" viewBox="0 0 24 24" font-family="Liberation Sans"><path d="M7 10h10l-5 6z" fill="#888"/></svg><div class="a" style="left:5px;top:160px;width:2px;height:26px;background:repeating-linear-gradient(to bottom,#9d9d9d 0 2px,transparent 2px 4px)"></div><svg class="a" style="left:15.0px;top:161.0px" width="24" height="24" viewBox="0 0 24 24" font-family="Liberation Sans"><rect x="2" y="2" width="20" height="20" fill="#c8e0b0"/><path d="M2 8c6 2 8 8 20 6M8 2c2 6 0 14 6 20" stroke="#9ac88a" stroke-width="2" fill="none"/><path d="M13 20l8-8" stroke="#4a8a2a" stroke-width="2.5"/></svg><svg class="a" style="left:45.0px;top:161.0px" width="24" height="24" viewBox="0 0 24 24" font-family="Liberation Sans"><rect x="2" y="5" width="19" height="17" fill="#a8c8e8"/><path d="M2 13l8-4 11 6v7H2z" fill="#f2d44a"/><rect x="2" y="2" width="6" height="6" fill="#4aa04a"/><path d="M11 19l9-16" stroke="#8a4a2a" stroke-width="3"/></svg><div class="a" style="left:75px;top:158px;width:1px;height:30px;background:#d4d4d4"></div><div class="a" style="left:80px;top:160px;width:2px;height:26px;background:repeating-linear-gradient(to bottom,#9d9d9d 0 2px,transparent 2px 4px)"></div><svg class="a" style="left:90.0px;top:161.0px" width="24" height="24" viewBox="0 0 24 24" font-family="Liberation Sans"><path d="M12 2v8M9 5l3-3 3 3" stroke="#111" stroke-width="1.6" fill="none"/><rect x="5" y="11" width="14" height="11" rx="1" fill="#111"/><circle cx="12" cy="16.5" r="3" fill="none" stroke="#fff" stroke-width="1.3"/></svg><svg class="a" style="left:120.0px;top:161.0px" width="24" height="24" viewBox="0 0 24 24" font-family="Liberation Sans"><rect x="2" y="3" width="17" height="14" fill="#444" stroke="#111" stroke-width="2" stroke-dasharray="3 1.5"/><path d="M5 14l5-5 4 3 3-2v5H5z" fill="#777"/><path d="M15 12l0 10 3-3 2 4 2-1-2-4h4z" fill="#fff" stroke="#111" stroke-width="1"/></svg>

<!-- left vertical toolbar -->
<div class="a" style="left:2px;top:190px;width:47px;height:808px;background:#f0f0f0"></div>
<div class="a" style="left:4px;top:195px;width:44px;height:2px;background:repeating-linear-gradient(to right,#9d9d9d 0 2px,transparent 2px 4px)"></div><svg class="a" style="left:5.0px;top:203.0px" width="24" height="24" viewBox="0 0 24 24" font-family="Liberation Sans"><path d="M2 4l6 14 7-14h6" fill="none" stroke="#333" stroke-width="1.4"/><circle cx="8" cy="18" r="2" fill="#fff" stroke="#333"/><circle cx="15" cy="4" r="1.8" fill="#fff" stroke="#333"/><circle cx="21" cy="4" r="1.8" fill="#fff" stroke="#333"/><circle cx="2" cy="4" r="1.5" fill="#fff" stroke="#333"/><rect x="15" y="15" width="9" height="9" rx="1.5" fill="#5a9a5a"/><path d="M19.5 16.5v6M16.5 19.5h6" stroke="#fff" stroke-width="1.8"/></svg><svg class="a" style="left:5.0px;top:233.0px" width="24" height="24" viewBox="0 0 24 24" font-family="Liberation Sans"><rect x="1" y="2" width="6" height="6" fill="#2a4a78"/><rect x="7" y="2" width="6" height="6" fill="#6a98c8"/><rect x="13" y="2" width="6" height="6" fill="#2a4a78"/><rect x="1" y="8" width="6" height="6" fill="#6a98c8"/><rect x="7" y="8" width="6" height="6" fill="#2a4a78"/><rect x="13" y="8" width="6" height="6" fill="#6a98c8"/><rect x="1" y="14" width="6" height="6" fill="#2a4a78"/><rect x="7" y="14" width="6" height="6" fill="#6a98c8"/><rect x="13" y="14" width="6" height="6" fill="#9ab8d8"/><rect x="15" y="15" width="9" height="9" rx="1.5" fill="#5a9a5a"/><path d="M19.5 16.5v6M16.5 19.5h6" stroke="#fff" stroke-width="1.8"/></svg><svg class="a" style="left:5.0px;top:264.0px" width="24" height="24" viewBox="0 0 24 24" font-family="Liberation Sans"><rect x="2" y="2" width="19" height="19" fill="#6a98c8" stroke="#2a4a78"/><path d="M2 11h19M11 2v19M2 2l9 9M11 11l10-9" stroke="#2a4a78" stroke-width="1"/><rect x="15" y="15" width="9" height="9" rx="1.5" fill="#5a9a5a"/><path d="M19.5 16.5v6M16.5 19.5h6" stroke="#fff" stroke-width="1.8"/></svg><svg class="a" style="left:5.0px;top:294.0px" width="24" height="24" viewBox="0 0 24 24" font-family="Liberation Sans"><path d="M5 3c4-2 7 2 5 6-1 2-3 3-3 5" fill="none" stroke="#3a5a88" stroke-width="3"/><rect x="15" y="15" width="9" height="9" rx="1.5" fill="#5a9a5a"/><path d="M19.5 16.5v6M16.5 19.5h6" stroke="#fff" stroke-width="1.8"/></svg><svg class="a" style="left:5.0px;top:325.0px" width="24" height="24" viewBox="0 0 24 24" font-family="Liberation Sans"><path d="M2 22C6 14 12 6 22 2c-2 8-8 14-16 16z" fill="#7aa0d8" stroke="#4a70a8" stroke-width="0.9"/><rect x="15" y="15" width="9" height="9" rx="1.5" fill="#5a9a5a"/><path d="M19.5 16.5v6M16.5 19.5h6" stroke="#fff" stroke-width="1.8"/></svg><svg class="a" style="left:5.0px;top:355.0px" width="24" height="24" viewBox="0 0 24 24" font-family="Liberation Sans"><rect x="2" y="2" width="19" height="19" fill="#a8c4e0" stroke="#4a70a8" stroke-width="1.2"/><path d="M4 4l7 13 6-13h3" fill="none" stroke="#333" stroke-width="1.2"/><rect x="15" y="15" width="9" height="9" rx="1.5" fill="#5a9a5a"/><path d="M19.5 16.5v6M16.5 19.5h6" stroke="#fff" stroke-width="1.8"/></svg><svg class="a" style="left:5.0px;top:385.0px" width="24" height="24" viewBox="0 0 24 24" font-family="Liberation Sans"><path d="M3 6c0-4 6-5 10-4s7 2 6 7-4 6-6 5-2 6-5 6-5-8-5-14z" fill="#5a88b8" stroke="#2a4a78"/><rect x="15" y="15" width="9" height="9" rx="1.5" fill="#5a9a5a"/><path d="M19.5 16.5v6M16.5 19.5h6" stroke="#fff" stroke-width="1.8"/></svg><svg class="a" style="left:5.0px;top:415.0px" width="24" height="24" viewBox="0 0 24 24" font-family="Liberation Sans"><circle cx="11" cy="11" r="9.5" fill="#6a98d0" stroke="#2a4a78"/><path d="M1.5 11h19M11 1.5v19M4 5c4 3 10 3 14 0M4 17c4-3 10-3 14 0" stroke="#d0e0f0" stroke-width="1" fill="none"/><rect x="15" y="15" width="9" height="9" rx="1.5" fill="#5a9a5a"/><path d="M19.5 16.5v6M16.5 19.5h6" stroke="#fff" stroke-width="1.8"/></svg><svg class="a" style="left:5.0px;top:444.0px" width="24" height="24" viewBox="0 0 24 24" font-family="Liberation Sans"><circle cx="11" cy="11" r="9.5" fill="#3a68a8" stroke="#1a3a68"/><path d="M1.5 11h19M11 1.5v19M4 5c4 3 10 3 14 0M4 17c4-3 10-3 14 0" stroke="#fff" stroke-width="1.2" fill="none"/><rect x="15" y="15" width="9" height="9" rx="1.5" fill="#5a9a5a"/><path d="M19.5 16.5v6M16.5 19.5h6" stroke="#fff" stroke-width="1.8"/></svg><svg class="a" style="left:5.0px;top:474.0px" width="24" height="24" viewBox="0 0 24 24" font-family="Liberation Sans"><circle cx="11" cy="11" r="9.5" fill="#d8e4f0" stroke="#4a6a98"/><path d="M3 5l6 12 7-12h5" fill="none" stroke="#333" stroke-width="1.2"/><rect x="15" y="15" width="9" height="9" rx="1.5" fill="#5a9a5a"/><path d="M19.5 16.5v6M16.5 19.5h6" stroke="#fff" stroke-width="1.8"/></svg><svg class="a" style="left:5.0px;top:504.0px" width="24" height="24" viewBox="0 0 24 24" font-family="Liberation Sans"><path d="M2 4l6 14 7-14h6" fill="none" stroke="#333" stroke-width="1.4"/><circle cx="8" cy="18" r="2" fill="#fff" stroke="#333"/><circle cx="15" cy="4" r="1.8" fill="#fff" stroke="#333"/><circle cx="21" cy="4" r="1.8" fill="#fff" stroke="#333"/><rect x="15" y="15" width="9" height="9" rx="1.5" fill="#e3c44a"/><circle cx="19.5" cy="19.5" r="2.2" fill="none" stroke="#fff" stroke-width="1.3"/></svg><svg class="a" style="left:13.0px;top:535.0px" width="24" height="24" viewBox="0 0 24 24" font-family="Liberation Sans"><rect x="2" y="2" width="19" height="19" fill="#5a88b8" stroke="#2a4a78"/><path d="M2 7h19M2 11h19M2 15h19M7 2v19M12 2v19M17 2v19" stroke="#fff" stroke-width="0.9"/><rect x="15" y="15" width="9" height="9" rx="1.5" fill="#5a9a5a"/><path d="M19.5 16.5v6M16.5 19.5h6" stroke="#fff" stroke-width="1.8"/></svg><svg class="a" style="left:31.0px;top:388.0px" width="18" height="18" viewBox="0 0 24 24" font-family="Liberation Sans"><path d="M7 10h10l-5 6z" fill="#111"/></svg><svg class="a" style="left:31.0px;top:418.0px" width="18" height="18" viewBox="0 0 24 24" font-family="Liberation Sans"><path d="M7 10h10l-5 6z" fill="#111"/></svg><svg class="a" style="left:31.0px;top:477.0px" width="18" height="18" viewBox="0 0 24 24" font-family="Liberation Sans"><path d="M7 10h10l-5 6z" fill="#111"/></svg><svg class="a" style="left:31.0px;top:507.0px" width="18" height="18" viewBox="0 0 24 24" font-family="Liberation Sans"><path d="M7 10h10l-5 6z" fill="#111"/></svg>

<!-- layer panel -->
<div class="a" style="left:50px;top:191px;width:330px;height:31px;background:#dadada;border-bottom:1px solid #c4c4c4"></div>
<div class="a" style="left:55px;top:199px;font-size:14.4px;color:#111">Layer</div>
<svg class="a" style="left:333px;top:197px" width="18" height="19"><rect x="5" y="2" width="11" height="9" fill="none" stroke="#333" stroke-width="2"/><rect x="1" y="7" width="11" height="10" fill="#dadada" stroke="#333" stroke-width="2"/></svg>
<svg class="a" style="left:357px;top:198px" width="17" height="17"><path d="M2 2L15 15M15 2L2 15" stroke="#333" stroke-width="3"/></svg>
<svg class="a" style="left:51.0px;top:225.0px" width="22" height="22" viewBox="0 0 24 24" font-family="Liberation Sans"><path d="M3 18l8-8 5 5-8 6z" fill="#e05a3a"/><path d="M5 14l6-4 2 3-6 4z" fill="#4a9ad0"/><path d="M11 10l9-7-5 9z" fill="#f2c040"/></svg><svg class="a" style="left:75.0px;top:225.0px" width="22" height="22" viewBox="0 0 24 24" font-family="Liberation Sans"><path d="M5 5h10v14H5z" fill="none" stroke="#888" stroke-width="1.1"/><path d="M8 2h10v14" fill="none" stroke="#888" stroke-width="1.1"/><path d="M10 7v7M13 5v9" stroke="#888"/><circle cx="17" cy="18" r="4" fill="#6ab06a"/></svg><svg class="a" style="left:99.0px;top:225.0px" width="22" height="22" viewBox="0 0 24 24" font-family="Liberation Sans"><ellipse cx="10" cy="11" rx="8" ry="5" fill="#dde8f4" stroke="#8aa0c0"/><circle cx="10" cy="11" r="3" fill="#4a6ab0"/><path d="M13 15h8l-4 5z" fill="#111"/></svg><svg class="a" style="left:121.0px;top:225.0px" width="22" height="22" viewBox="0 0 24 24" font-family="Liberation Sans"><path d="M3 3h18l-7 9v9l-4 2V12z" fill="#5a90c8"/><rect x="3" y="3" width="18" height="3" fill="#e8e050"/></svg><svg class="a" style="left:144.0px;top:225.0px" width="22" height="22" viewBox="0 0 24 24" font-family="Liberation Sans"><text x="2" y="15" font-size="15" fill="#8a5aa0" font-family="Liberation Serif">ε</text><rect x="12" y="14" width="7" height="7" fill="#bbb"/></svg><svg class="a" style="left:182.0px;top:225.0px" width="22" height="22" viewBox="0 0 24 24" font-family="Liberation Sans"><rect x="3" y="4" width="10" height="16" fill="none" stroke="#e8a050"/><path d="M15 3v12M11 12l4 6 4-6" stroke="#4a7ab5" stroke-width="3" fill="none"/></svg><svg class="a" style="left:205.0px;top:225.0px" width="22" height="22" viewBox="0 0 24 24" font-family="Liberation Sans"><rect x="3" y="4" width="10" height="16" fill="none" stroke="#e8a050"/><path d="M15 21V8M11 11l4-6 4 6" stroke="#4a7ab5" stroke-width="3" fill="none"/></svg><svg class="a" style="left:227.0px;top:225.0px" width="22" height="22" viewBox="0 0 24 24" font-family="Liberation Sans"><rect x="3" y="4" width="14" height="14" fill="none" stroke="#666" stroke-width="1.1"/><rect x="14" y="15" width="8" height="6" rx="1.5" fill="#d84050"/><path d="M16 18h4" stroke="#fff" stroke-width="1.4"/></svg><svg class="a" style="left:164.0px;top:227.0px" width="20" height="20" viewBox="0 0 24 24" font-family="Liberation Sans"><path d="M7 10h10l-5 6z" fill="#111"/></svg>
<div class="a lt" style="left:50px;top:250px;width:330px;height:747px;background:#fff;border:1px solid #a7a7a7;border-right:1px solid #c8c8c8">
</div>
<div class="a" style="left:51px;top:251px;width:322px;height:725px;overflow:hidden"><div class="a" style="left:28px;top:4px;width:16px;height:16px;border:1px solid #333;background:#fff"></div><svg class="a" style="left:28px;top:4px" width="16" height="16"><path d="M3.5 8.5l3 3 6-7" fill="none" stroke="#333" stroke-width="1.3"/></svg><svg class="a" style="left:53px;top:4px" width="16" height="16"><circle cx="7.5" cy="8" r="7" fill="#fff" stroke="#222" stroke-width="1.2"/><circle cx="7.5" cy="8" r="2.6" fill="#111"/></svg><div class="a" style="left:76px;top:4px;font-size:14.6px;white-space:nowrap;font-weight:bold;">Funde_WT_2017_2019</div><svg class="a" style="left:8px;top:30px" width="8" height="12"><path d="M1.5 1l5 5-5 5" fill="none" stroke="#8a8a8a" stroke-width="1.4"/></svg><div class="a" style="left:28px;top:28px;width:16px;height:16px;border:1px solid #333;background:#fff"></div><svg class="a" style="left:28px;top:28px" width="16" height="16"><path d="M3.5 8.5l3 3 6-7" fill="none" stroke="#333" stroke-width="1.3"/></svg><svg class="a" style="left:53px;top:26px" width="20" height="20"><path d="M1.5 9v9.5h10" fill="none" stroke="#9a9a9a" stroke-width="1.1"/><path d="M3.5 6.5h10v10h-10z" fill="#fff" stroke="#7f7f7f" stroke-width="1.1"/><path d="M6.5 4.5h10v10" fill="none" stroke="#7f7f7f" stroke-width="1.1"/><path d="M8 9v5h3V2.5h-2v7" fill="none" stroke="#6f6f6f" stroke-width="1.1"/></svg><div class="a" style="left:76px;top:28px;font-size:14.3px;white-space:nowrap;">Gebiet_und_Wege</div><svg class="a" style="left:8px;top:54px" width="8" height="12"><path d="M1.5 1l5 5-5 5" fill="none" stroke="#8a8a8a" stroke-width="1.4"/></svg><div class="a" style="left:28px;top:52px;width:16px;height:16px;border:1px solid #333;background:#fff"></div><svg class="a" style="left:54px;top:52px" width="15" height="15"><rect x="0" y="0" width="5" height="5" fill="#2a4a78"/><rect x="5" y="0" width="5" height="5" fill="#9ab8d8"/><rect x="10" y="0" width="5" height="5" fill="#2a4a78"/><rect x="0" y="5" width="5" height="5" fill="#9ab8d8"/><rect x="5" y="5" width="5" height="5" fill="#2a4a78"/><rect x="10" y="5" width="5" height="5" fill="#9ab8d8"/><rect x="0" y="10" width="5" height="5" fill="#2a4a78"/><rect x="5" y="10" width="5" height="5" fill="#9ab8d8"/><rect x="10" y="10" width="5" height="5" fill="#c8d8e8"/></svg><div class="a" style="left:76px;top:52px;font-size:14.6px;white-space:nowrap;font-weight:bold;font-style:italic;color:#777;">WMS LGRB-BW BK50: Bodenkarte</div><svg class="a" style="left:8px;top:78px" width="8" height="12"><path d="M1.5 1l5 5-5 5" fill="none" stroke="#8a8a8a" stroke-width="1.4"/></svg><div class="a" style="left:28px;top:76px;width:16px;height:16px;border:1px solid #333;background:#fff"></div><svg class="a" style="left:54px;top:76px" width="15" height="15"><rect x="0" y="0" width="5" height="5" fill="#2a4a78"/><rect x="5" y="0" width="5" height="5" fill="#9ab8d8"/><rect x="10" y="0" width="5" height="5" fill="#2a4a78"/><rect x="0" y="5" width="5" height="5" fill="#9ab8d8"/><rect x="5" y="5" width="5" height="5" fill="#2a4a78"/><rect x="10" y="5" width="5" height="5" fill="#9ab8d8"/><rect x="0" y="10" width="5" height="5" fill="#2a4a78"/><rect x="5" y="10" width="5" height="5" fill="#9ab8d8"/><rect x="10" y="10" width="5" height="5" fill="#c8d8e8"/></svg><div class="a" style="left:76px;top:76px;font-size:14.6px;white-space:nowrap;font-weight:bold;font-style:italic;color:#777;">WMS LGRB-BW GK50: Geologische</div><svg class="a" style="left:6px;top:104px" width="12" height="8"><path d="M1 1.5l5 5 5-5" fill="none" stroke="#333" stroke-width="1.4"/></svg><div class="a" style="left:28px;top:100px;width:16px;height:16px;border:1px solid #333;background:#fff"></div><svg class="a" style="left:28px;top:100px" width="16" height="16"><path d="M3.5 8.5l3 3 6-7" fill="none" stroke="#333" stroke-width="1.3"/></svg><svg class="a" style="left:53px;top:98px" width="20" height="20"><path d="M1.5 9v9.5h10" fill="none" stroke="#9a9a9a" stroke-width="1.1"/><path d="M3.5 6.5h10v10h-10z" fill="#fff" stroke="#7f7f7f" stroke-width="1.1"/><path d="M6.5 4.5h10v10" fill="none" stroke="#7f7f7f" stroke-width="1.1"/><path d="M8 9v5h3V2.5h-2v7" fill="none" stroke="#6f6f6f" stroke-width="1.1"/></svg><div class="a" style="left:76px;top:100px;font-size:14.3px;white-space:nowrap;">Pflanzengesellschaften</div><svg class="a" style="left:33px;top:126px" width="8" height="12"><path d="M1.5 1l5 5-5 5" fill="none" stroke="#8a8a8a" stroke-width="1.4"/></svg><div class="a" style="left:53px;top:124px;width:16px;height:16px;border:1px solid #333;background:#fff"></div><svg class="a" style="left:53px;top:124px" width="16" height="16"><path d="M3.5 8.5l3 3 6-7" fill="none" stroke="#333" stroke-width="1.3"/></svg><svg class="a" style="left:78px;top:122px" width="20" height="20"><path d="M1.5 9v9.5h10" fill="none" stroke="#9a9a9a" stroke-width="1.1"/><path d="M3.5 6.5h10v10h-10z" fill="#fff" stroke="#7f7f7f" stroke-width="1.1"/><path d="M6.5 4.5h10v10" fill="none" stroke="#7f7f7f" stroke-width="1.1"/><path d="M8 9v5h3V2.5h-2v7" fill="none" stroke="#6f6f6f" stroke-width="1.1"/></svg><div class="a" style="left:101px;top:124px;font-size:14.3px;white-space:nowrap;">Polytrichum_commune_Fazies</div><svg class="a" style="left:33px;top:150px" width="8" height="12"><path d="M1.5 1l5 5-5 5" fill="none" stroke="#8a8a8a" stroke-width="1.4"/></svg><div class="a" style="left:53px;top:148px;width:16px;height:16px;border:1px solid #333;background:#fff"></div><svg class="a" style="left:53px;top:148px" width="16" height="16"><path d="M3.5 8.5l3 3 6-7" fill="none" stroke="#333" stroke-width="1.3"/></svg><svg class="a" style="left:78px;top:146px" width="20" height="20"><path d="M1.5 9v9.5h10" fill="none" stroke="#9a9a9a" stroke-width="1.1"/><path d="M3.5 6.5h10v10h-10z" fill="#fff" stroke="#7f7f7f" stroke-width="1.1"/><path d="M6.5 4.5h10v10" fill="none" stroke="#7f7f7f" stroke-width="1.1"/><path d="M8 9v5h3V2.5h-2v7" fill="none" stroke="#6f6f6f" stroke-width="1.1"/></svg><div class="a" style="left:101px;top:148px;font-size:14.3px;white-space:nowrap;">Sphagnetum_magellanici_Moor1</div><svg class="a" style="left:33px;top:174px" width="8" height="12"><path d="M1.5 1l5 5-5 5" fill="none" stroke="#8a8a8a" stroke-width="1.4"/></svg><div class="a" style="left:53px;top:172px;width:16px;height:16px;border:1px solid #333;background:#fff"></div><svg class="a" style="left:53px;top:172px" width="16" height="16"><path d="M3.5 8.5l3 3 6-7" fill="none" stroke="#333" stroke-width="1.3"/></svg><svg class="a" style="left:78px;top:170px" width="20" height="20"><path d="M1.5 9v9.5h10" fill="none" stroke="#9a9a9a" stroke-width="1.1"/><path d="M3.5 6.5h10v10h-10z" fill="#fff" stroke="#7f7f7f" stroke-width="1.1"/><path d="M6.5 4.5h10v10" fill="none" stroke="#7f7f7f" stroke-width="1.1"/><path d="M8 9v5h3V2.5h-2v7" fill="none" stroke="#6f6f6f" stroke-width="1.1"/></svg><div class="a" style="left:101px;top:172px;font-size:14.3px;white-space:nowrap;">Eriophorum_vaginatum_Molinia_Moor2</div><svg class="a" style="left:33px;top:198px" width="8" height="12"><path d="M1.5 1l5 5-5 5" fill="none" stroke="#8a8a8a" stroke-width="1.4"/></svg><div class="a" style="left:53px;top:196px;width:16px;height:16px;border:1px solid #333;background:#fff"></div><svg class="a" style="left:53px;top:196px" width="16" height="16"><path d="M3.5 8.5l3 3 6-7" fill="none" stroke="#333" stroke-width="1.3"/></svg><svg class="a" style="left:78px;top:194px" width="20" height="20"><path d="M1.5 9v9.5h10" fill="none" stroke="#9a9a9a" stroke-width="1.1"/><path d="M3.5 6.5h10v10h-10z" fill="#fff" stroke="#7f7f7f" stroke-width="1.1"/><path d="M6.5 4.5h10v10" fill="none" stroke="#7f7f7f" stroke-width="1.1"/><path d="M8 9v5h3V2.5h-2v7" fill="none" stroke="#6f6f6f" stroke-width="1.1"/></svg><div class="a" style="left:101px;top:196px;font-size:14.3px;white-space:nowrap;">Eriophorum_vaginatum_Moor3</div><svg class="a" style="left:33px;top:222px" width="8" height="12"><path d="M1.5 1l5 5-5 5" fill="none" stroke="#8a8a8a" stroke-width="1.4"/></svg><div class="a" style="left:53px;top:220px;width:16px;height:16px;border:1px solid #333;background:#fff"></div><svg class="a" style="left:53px;top:220px" width="16" height="16"><path d="M3.5 8.5l3 3 6-7" fill="none" stroke="#333" stroke-width="1.3"/></svg><svg class="a" style="left:78px;top:218px" width="20" height="20"><path d="M1.5 9v9.5h10" fill="none" stroke="#9a9a9a" stroke-width="1.1"/><path d="M3.5 6.5h10v10h-10z" fill="#fff" stroke="#7f7f7f" stroke-width="1.1"/><path d="M6.5 4.5h10v10" fill="none" stroke="#7f7f7f" stroke-width="1.1"/><path d="M8 9v5h3V2.5h-2v7" fill="none" stroke="#6f6f6f" stroke-width="1.1"/></svg><div class="a" style="left:101px;top:220px;font-size:14.3px;white-space:nowrap;">Eriophorum_vaginatum_Moor4</div><svg class="a" style="left:33px;top:246px" width="8" height="12"><path d="M1.5 1l5 5-5 5" fill="none" stroke="#8a8a8a" stroke-width="1.4"/></svg><div class="a" style="left:53px;top:244px;width:16px;height:16px;border:1px solid #333;background:#fff"></div><svg class="a" style="left:53px;top:244px" width="16" height="16"><path d="M3.5 8.5l3 3 6-7" fill="none" stroke="#333" stroke-width="1.3"/></svg><svg class="a" style="left:78px;top:242px" width="20" height="20"><path d="M1.5 9v9.5h10" fill="none" stroke="#9a9a9a" stroke-width="1.1"/><path d="M3.5 6.5h10v10h-10z" fill="#fff" stroke="#7f7f7f" stroke-width="1.1"/><path d="M6.5 4.5h10v10" fill="none" stroke="#7f7f7f" stroke-width="1.1"/><path d="M8 9v5h3V2.5h-2v7" fill="none" stroke="#6f6f6f" stroke-width="1.1"/></svg><div class="a" style="left:101px;top:244px;font-size:14.3px;white-space:nowrap;">Vaccinio_Abietetum</div><svg class="a" style="left:33px;top:270px" width="8" height="12"><path d="M1.5 1l5 5-5 5" fill="none" stroke="#8a8a8a" stroke-width="1.4"/></svg><div class="a" style="left:53px;top:268px;width:16px;height:16px;border:1px solid #333;background:#fff"></div><svg class="a" style="left:53px;top:268px" width="16" height="16"><path d="M3.5 8.5l3 3 6-7" fill="none" stroke="#333" stroke-width="1.3"/></svg><svg class="a" style="left:78px;top:266px" width="20" height="20"><path d="M1.5 9v9.5h10" fill="none" stroke="#9a9a9a" stroke-width="1.1"/><path d="M3.5 6.5h10v10h-10z" fill="#fff" stroke="#7f7f7f" stroke-width="1.1"/><path d="M6.5 4.5h10v10" fill="none" stroke="#7f7f7f" stroke-width="1.1"/><path d="M8 9v5h3V2.5h-2v7" fill="none" stroke="#6f6f6f" stroke-width="1.1"/></svg><div class="a" style="left:101px;top:268px;font-size:14.3px;white-space:nowrap;">Vaccinio_uliginosi_P_sylvestris_P_mugo</div><svg class="a" style="left:33px;top:294px" width="8" height="12"><path d="M1.5 1l5 5-5 5" fill="none" stroke="#8a8a8a" stroke-width="1.4"/></svg><div class="a" style="left:53px;top:292px;width:16px;height:16px;border:1px solid #333;background:#fff"></div><svg class="a" style="left:53px;top:292px" width="16" height="16"><path d="M3.5 8.5l3 3 6-7" fill="none" stroke="#333" stroke-width="1.3"/></svg><svg class="a" style="left:78px;top:290px" width="20" height="20"><path d="M1.5 9v9.5h10" fill="none" stroke="#9a9a9a" stroke-width="1.1"/><path d="M3.5 6.5h10v10h-10z" fill="#fff" stroke="#7f7f7f" stroke-width="1.1"/><path d="M6.5 4.5h10v10" fill="none" stroke="#7f7f7f" stroke-width="1.1"/><path d="M8 9v5h3V2.5h-2v7" fill="none" stroke="#6f6f6f" stroke-width="1.1"/></svg><div class="a" style="left:101px;top:292px;font-size:14.3px;white-space:nowrap;">Vaccinio_uliginosi_Pinetum_sylvestris1</div><svg class="a" style="left:33px;top:318px" width="8" height="12"><path d="M1.5 1l5 5-5 5" fill="none" stroke="#8a8a8a" stroke-width="1.4"/></svg><div class="a" style="left:53px;top:316px;width:16px;height:16px;border:1px solid #333;background:#fff"></div><svg class="a" style="left:53px;top:316px" width="16" height="16"><path d="M3.5 8.5l3 3 6-7" fill="none" stroke="#333" stroke-width="1.3"/></svg><svg class="a" style="left:78px;top:314px" width="20" height="20"><path d="M1.5 9v9.5h10" fill="none" stroke="#9a9a9a" stroke-width="1.1"/><path d="M3.5 6.5h10v10h-10z" fill="#fff" stroke="#7f7f7f" stroke-width="1.1"/><path d="M6.5 4.5h10v10" fill="none" stroke="#7f7f7f" stroke-width="1.1"/><path d="M8 9v5h3V2.5h-2v7" fill="none" stroke="#6f6f6f" stroke-width="1.1"/></svg><div class="a" style="left:101px;top:316px;font-size:14.3px;white-space:nowrap;">Vaccinio_uliginosi_Pinetum_sylvestris2</div><svg class="a" style="left:33px;top:342px" width="8" height="12"><path d="M1.5 1l5 5-5 5" fill="none" stroke="#8a8a8a" stroke-width="1.4"/></svg><div class="a" style="left:53px;top:340px;width:16px;height:16px;border:1px solid #333;background:#fff"></div><svg class="a" style="left:53px;top:340px" width="16" height="16"><path d="M3.5 8.5l3 3 6-7" fill="none" stroke="#333" stroke-width="1.3"/></svg><svg class="a" style="left:78px;top:338px" width="20" height="20"><path d="M1.5 9v9.5h10" fill="none" stroke="#9a9a9a" stroke-width="1.1"/><path d="M3.5 6.5h10v10h-10z" fill="#fff" stroke="#7f7f7f" stroke-width="1.1"/><path d="M6.5 4.5h10v10" fill="none" stroke="#7f7f7f" stroke-width="1.1"/><path d="M8 9v5h3V2.5h-2v7" fill="none" stroke="#6f6f6f" stroke-width="1.1"/></svg><div class="a" style="left:101px;top:340px;font-size:14.3px;white-space:nowrap;">Vaccinio_uliginosi_Pinetum_sylvestris3</div><svg class="a" style="left:33px;top:366px" width="8" height="12"><path d="M1.5 1l5 5-5 5" fill="none" stroke="#8a8a8a" stroke-width="1.4"/></svg><div class="a" style="left:53px;top:364px;width:16px;height:16px;border:1px solid #333;background:#fff"></div><svg class="a" style="left:53px;top:364px" width="16" height="16"><path d="M3.5 8.5l3 3 6-7" fill="none" stroke="#333" stroke-width="1.3"/></svg><svg class="a" style="left:78px;top:362px" width="20" height="20"><path d="M1.5 9v9.5h10" fill="none" stroke="#9a9a9a" stroke-width="1.1"/><path d="M3.5 6.5h10v10h-10z" fill="#fff" stroke="#7f7f7f" stroke-width="1.1"/><path d="M6.5 4.5h10v10" fill="none" stroke="#7f7f7f" stroke-width="1.1"/><path d="M8 9v5h3V2.5h-2v7" fill="none" stroke="#6f6f6f" stroke-width="1.1"/></svg><div class="a" style="left:101px;top:364px;font-size:14.3px;white-space:nowrap;">Vaccinio_uliginosi_Pinetum_sylvestris4</div><svg class="a" style="left:33px;top:390px" width="8" height="12"><path d="M1.5 1l5 5-5 5" fill="none" stroke="#8a8a8a" stroke-width="1.4"/></svg><div class="a" style="left:53px;top:388px;width:16px;height:16px;border:1px solid #333;background:#fff"></div><svg class="a" style="left:53px;top:388px" width="16" height="16"><path d="M3.5 8.5l3 3 6-7" fill="none" stroke="#333" stroke-width="1.3"/></svg><svg class="a" style="left:78px;top:386px" width="20" height="20"><path d="M1.5 9v9.5h10" fill="none" stroke="#9a9a9a" stroke-width="1.1"/><path d="M3.5 6.5h10v10h-10z" fill="#fff" stroke="#7f7f7f" stroke-width="1.1"/><path d="M6.5 4.5h10v10" fill="none" stroke="#7f7f7f" stroke-width="1.1"/><path d="M8 9v5h3V2.5h-2v7" fill="none" stroke="#6f6f6f" stroke-width="1.1"/></svg><div class="a" style="left:101px;top:388px;font-size:14.3px;white-space:nowrap;">Vaccinio_uliginosi_Pinetum_sylvestris5</div><svg class="a" style="left:8px;top:414px" width="8" height="12"><path d="M1.5 1l5 5-5 5" fill="none" stroke="#8a8a8a" stroke-width="1.4"/></svg><div class="a" style="left:28px;top:412px;width:16px;height:16px;border:1px solid #333;background:#fff"></div><svg class="a" style="left:28px;top:412px" width="16" height="16"><path d="M3.5 8.5l3 3 6-7" fill="none" stroke="#333" stroke-width="1.3"/></svg><svg class="a" style="left:53px;top:410px" width="20" height="20"><path d="M1.5 9v9.5h10" fill="none" stroke="#9a9a9a" stroke-width="1.1"/><path d="M3.5 6.5h10v10h-10z" fill="#fff" stroke="#7f7f7f" stroke-width="1.1"/><path d="M6.5 4.5h10v10" fill="none" stroke="#7f7f7f" stroke-width="1.1"/><path d="M8 9v5h3V2.5h-2v7" fill="none" stroke="#6f6f6f" stroke-width="1.1"/></svg><div class="a" style="left:76px;top:412px;font-size:14.3px;white-space:nowrap;">Biotope</div><svg class="a" style="left:6px;top:440px" width="12" height="8"><path d="M1 1.5l5 5 5-5" fill="none" stroke="#333" stroke-width="1.4"/></svg><div class="a" style="left:28px;top:436px;width:16px;height:16px;border:1px solid #333;background:#fff"></div><svg class="a" style="left:28px;top:436px" width="16" height="16"><path d="M3.5 8.5l3 3 6-7" fill="none" stroke="#333" stroke-width="1.3"/></svg><svg class="a" style="left:54px;top:436px" width="15" height="15"><rect x="0" y="0" width="5" height="5" fill="#2a4a78"/><rect x="5" y="0" width="5" height="5" fill="#9ab8d8"/><rect x="10" y="0" width="5" height="5" fill="#2a4a78"/><rect x="0" y="5" width="5" height="5" fill="#9ab8d8"/><rect x="5" y="5" width="5" height="5" fill="#2a4a78"/><rect x="10" y="5" width="5" height="5" fill="#9ab8d8"/><rect x="0" y="10" width="5" height="5" fill="#2a4a78"/><rect x="5" y="10" width="5" height="5" fill="#9ab8d8"/><rect x="10" y="10" width="5" height="5" fill="#c8d8e8"/></svg><div class="a" style="left:76px;top:436px;font-size:14.6px;white-space:nowrap;font-weight:bold;">OpenStreetMap Standard</div></div><div class="a" style="left:373px;top:255px;width:5px;height:451px;background:#e6e6e6"></div><div class="a" style="left:51px;top:977px;width:328px;height:19px;background:#f0f0f0"></div><div class="a" style="left:72px;top:977px;width:185px;height:18px;background:#cdcdcd"></div><svg class="a" style="left:56px;top:980px" width="10" height="12"><path d="M7 1.5l-5 4.5 5 4.5" fill="none" stroke="#333" stroke-width="1.6"/></svg><svg class="a" style="left:363px;top:980px" width="10" height="12"><path d="M3 1.5l5 4.5-5 4.5" fill="none" stroke="#333" stroke-width="1.6"/></svg>

<!-- map -->
<div class="a" style="left:385px;top:190px;width:1535px;height:808px;background:#a9d19b;border-left:1px solid #9a9a9a;border-top:1px solid #9a9a9a;border-bottom:1px solid #8a8a8a;overflow:hidden">
<svg class="a" style="left:0;top:0" width="1535" height="808" viewBox="385 190 1535 808" font-family="Liberation Sans, sans-serif"><defs>
<pattern id="trees" width="168" height="168" patternUnits="userSpaceOnUse" x="385" y="190">
<g fill="none" stroke="#8ab87d" stroke-width="0.9"><path d="M9.0 9.4v4M13.4 9.4v4"/><circle cx="9.0" cy="7.4" r="2"/><circle cx="13.4" cy="7.4" r="2"/><path d="M42.2 8.2v4M46.6 8.2v4"/><circle cx="42.2" cy="6.2" r="2"/><circle cx="46.6" cy="6.2" r="2"/><path d="M68.4 12.9v4M72.8 12.9v4"/><circle cx="68.4" cy="10.9" r="2"/><circle cx="72.8" cy="10.9" r="2"/><path d="M88.7 15.1v4M93.1 15.1v4"/><circle cx="88.7" cy="13.1" r="2"/><circle cx="93.1" cy="13.1" r="2"/><path d="M116.4 13.9v4M120.8 13.9v4"/><circle cx="116.4" cy="11.9" r="2"/><circle cx="120.8" cy="11.9" r="2"/><path d="M144.9 8.5v4M149.3 8.5v4"/><circle cx="144.9" cy="6.5" r="2"/><circle cx="149.3" cy="6.5" r="2"/><path d="M24.6 48.2v4M29.0 48.2v4"/><circle cx="24.6" cy="46.2" r="2"/><circle cx="29.0" cy="46.2" r="2"/><path d="M47.8 38.6v4M52.2 38.6v4"/><circle cx="47.8" cy="36.6" r="2"/><circle cx="52.2" cy="36.6" r="2"/><path d="M83.8 50.2v4M88.2 50.2v4"/><circle cx="83.8" cy="48.2" r="2"/><circle cx="88.2" cy="48.2" r="2"/><path d="M111.0 41.3v4M115.4 41.3v4"/><circle cx="111.0" cy="39.3" r="2"/><circle cx="115.4" cy="39.3" r="2"/><path d="M145.4 35.7v4M149.8 35.7v4"/><circle cx="145.4" cy="33.7" r="2"/><circle cx="149.8" cy="33.7" r="2"/><path d="M3.5 39.6v4M7.9 39.6v4"/><circle cx="3.5" cy="37.6" r="2"/><circle cx="7.9" cy="37.6" r="2"/><path d="M6.1 64.9v4M10.5 64.9v4"/><circle cx="6.1" cy="62.9" r="2"/><circle cx="10.5" cy="62.9" r="2"/><path d="M36.7 76.1v4M41.1 76.1v4"/><circle cx="36.7" cy="74.1" r="2"/><circle cx="41.1" cy="74.1" r="2"/><path d="M62.7 72.3v4M67.1 72.3v4"/><circle cx="62.7" cy="70.3" r="2"/><circle cx="67.1" cy="70.3" r="2"/><path d="M98.0 69.0v4M102.4 69.0v4"/><circle cx="98.0" cy="67.0" r="2"/><circle cx="102.4" cy="67.0" r="2"/><path d="M124.6 64.0v4M129.0 64.0v4"/><circle cx="124.6" cy="62.0" r="2"/><circle cx="129.0" cy="62.0" r="2"/><path d="M144.8 66.3v4M149.2 66.3v4"/><circle cx="144.8" cy="64.3" r="2"/><circle cx="149.2" cy="64.3" r="2"/><path d="M28.7 97.8v4M33.1 97.8v4"/><circle cx="28.7" cy="95.8" r="2"/><circle cx="33.1" cy="95.8" r="2"/><path d="M50.8 100.4v4M55.2 100.4v4"/><circle cx="50.8" cy="98.4" r="2"/><circle cx="55.2" cy="98.4" r="2"/><path d="M81.1 95.8v4M85.5 95.8v4"/><circle cx="81.1" cy="93.8" r="2"/><circle cx="85.5" cy="93.8" r="2"/><path d="M114.5 102.2v4M118.9 102.2v4"/><circle cx="114.5" cy="100.2" r="2"/><circle cx="118.9" cy="100.2" r="2"/><path d="M133.7 100.2v4M138.1 100.2v4"/><circle cx="133.7" cy="98.2" r="2"/><circle cx="138.1" cy="98.2" r="2"/><path d="M-1.8 105.0v4M2.6 105.0v4"/><circle cx="-1.8" cy="103.0" r="2"/><circle cx="2.6" cy="103.0" r="2"/><path d="M15.5 123.6v4M19.9 123.6v4"/><circle cx="15.5" cy="121.6" r="2"/><circle cx="19.9" cy="121.6" r="2"/><path d="M47.5 120.9v4M51.9 120.9v4"/><circle cx="47.5" cy="118.9" r="2"/><circle cx="51.9" cy="118.9" r="2"/><path d="M66.5 131.1v4M70.9 131.1v4"/><circle cx="66.5" cy="129.1" r="2"/><circle cx="70.9" cy="129.1" r="2"/><path d="M90.2 126.8v4M94.6 126.8v4"/><circle cx="90.2" cy="124.8" r="2"/><circle cx="94.6" cy="124.8" r="2"/><path d="M116.4 129.7v4M120.8 129.7v4"/><circle cx="116.4" cy="127.7" r="2"/><circle cx="120.8" cy="127.7" r="2"/><path d="M156.0 128.2v4M160.4 128.2v4"/><circle cx="156.0" cy="126.2" r="2"/><circle cx="160.4" cy="126.2" r="2"/><path d="M31.8 152.0v4M36.2 152.0v4"/><circle cx="31.8" cy="150.0" r="2"/><circle cx="36.2" cy="150.0" r="2"/><path d="M56.9 156.5v4M61.3 156.5v4"/><circle cx="56.9" cy="154.5" r="2"/><circle cx="61.3" cy="154.5" r="2"/><path d="M83.1 154.3v4M87.5 154.3v4"/><circle cx="83.1" cy="152.3" r="2"/><circle cx="87.5" cy="152.3" r="2"/><path d="M115.2 162.1v4M119.6 162.1v4"/><circle cx="115.2" cy="160.1" r="2"/><circle cx="119.6" cy="160.1" r="2"/><path d="M137.4 157.6v4M141.8 157.6v4"/><circle cx="137.4" cy="155.6" r="2"/><circle cx="141.8" cy="155.6" r="2"/><path d="M158.8 158.2v4M163.2 158.2v4"/><circle cx="158.8" cy="156.2" r="2"/><circle cx="163.2" cy="156.2" r="2"/></g></pattern>
<pattern id="trees2" width="168" height="168" patternUnits="userSpaceOnUse" x="385" y="190">
<g fill="none" stroke="#000" stroke-width="0.9" opacity="0.035"><path d="M9.0 9.4v4M13.4 9.4v4"/><circle cx="9.0" cy="7.4" r="2"/><circle cx="13.4" cy="7.4" r="2"/><path d="M42.2 8.2v4M46.6 8.2v4"/><circle cx="42.2" cy="6.2" r="2"/><circle cx="46.6" cy="6.2" r="2"/><path d="M68.4 12.9v4M72.8 12.9v4"/><circle cx="68.4" cy="10.9" r="2"/><circle cx="72.8" cy="10.9" r="2"/><path d="M88.7 15.1v4M93.1 15.1v4"/><circle cx="88.7" cy="13.1" r="2"/><circle cx="93.1" cy="13.1" r="2"/><path d="M116.4 13.9v4M120.8 13.9v4"/><circle cx="116.4" cy="11.9" r="2"/><circle cx="120.8" cy="11.9" r="2"/><path d="M144.9 8.5v4M149.3 8.5v4"/><circle cx="144.9" cy="6.5" r="2"/><circle cx="149.3" cy="6.5" r="2"/><path d="M24.6 48.2v4M29.0 48.2v4"/><circle cx="24.6" cy="46.2" r="2"/><circle cx="29.0" cy="46.2" r="2"/><path d="M47.8 38.6v4M52.2 38.6v4"/><circle cx="47.8" cy="36.6" r="2"/><circle cx="52.2" cy="36.6" r="2"/><path d="M83.8 50.2v4M88.2 50.2v4"/><circle cx="83.8" cy="48.2" r="2"/><circle cx="88.2" cy="48.2" r="2"/><path d="M111.0 41.3v4M115.4 41.3v4"/><circle cx="111.0" cy="39.3" r="2"/><circle cx="115.4" cy="39.3" r="2"/><path d="M145.4 35.7v4M149.8 35.7v4"/><circle cx="145.4" cy="33.7" r="2"/><circle cx="149.8" cy="33.7" r="2"/><path d="M3.5 39.6v4M7.9 39.6v4"/><circle cx="3.5" cy="37.6" r="2"/><circle cx="7.9" cy="37.6" r="2"/><path d="M6.1 64.9v4M10.5 64.9v4"/><circle cx="6.1" cy="62.9" r="2"/><circle cx="10.5" cy="62.9" r="2"/><path d="M36.7 76.1v4M41.1 76.1v4"/><circle cx="36.7" cy="74.1" r="2"/><circle cx="41.1" cy="74.1" r="2"/><path d="M62.7 72.3v4M67.1 72.3v4"/><circle cx="62.7" cy="70.3" r="2"/><circle cx="67.1" cy="70.3" r="2"/><path d="M98.0 69.0v4M102.4 69.0v4"/><circle cx="98.0" cy="67.0" r="2"/><circle cx="102.4" cy="67.0" r="2"/><path d="M124.6 64.0v4M129.0 64.0v4"/><circle cx="124.6" cy="62.0" r="2"/><circle cx="129.0" cy="62.0" r="2"/><path d="M144.8 66.3v4M149.2 66.3v4"/><circle cx="144.8" cy="64.3" r="2"/><circle cx="149.2" cy="64.3" r="2"/><path d="M28.7 97.8v4M33.1 97.8v4"/><circle cx="28.7" cy="95.8" r="2"/><circle cx="33.1" cy="95.8" r="2"/><path d="M50.8 100.4v4M55.2 100.4v4"/><circle cx="50.8" cy="98.4" r="2"/><circle cx="55.2" cy="98.4" r="2"/><path d="M81.1 95.8v4M85.5 95.8v4"/><circle cx="81.1" cy="93.8" r="2"/><circle cx="85.5" cy="93.8" r="2"/><path d="M114.5 102.2v4M118.9 102.2v4"/><circle cx="114.5" cy="100.2" r="2"/><circle cx="118.9" cy="100.2" r="2"/><path d="M133.7 100.2v4M138.1 100.2v4"/><circle cx="133.7" cy="98.2" r="2"/><circle cx="138.1" cy="98.2" r="2"/><path d="M-1.8 105.0v4M2.6 105.0v4"/><circle cx="-1.8" cy="103.0" r="2"/><circle cx="2.6" cy="103.0" r="2"/><path d="M15.5 123.6v4M19.9 123.6v4"/><circle cx="15.5" cy="121.6" r="2"/><circle cx="19.9" cy="121.6" r="2"/><path d="M47.5 120.9v4M51.9 120.9v4"/><circle cx="47.5" cy="118.9" r="2"/><circle cx="51.9" cy="118.9" r="2"/><path d="M66.5 131.1v4M70.9 131.1v4"/><circle cx="66.5" cy="129.1" r="2"/><circle cx="70.9" cy="129.1" r="2"/><path d="M90.2 126.8v4M94.6 126.8v4"/><circle cx="90.2" cy="124.8" r="2"/><circle cx="94.6" cy="124.8" r="2"/><path d="M116.4 129.7v4M120.8 129.7v4"/><circle cx="116.4" cy="127.7" r="2"/><circle cx="120.8" cy="127.7" r="2"/><path d="M156.0 128.2v4M160.4 128.2v4"/><circle cx="156.0" cy="126.2" r="2"/><circle cx="160.4" cy="126.2" r="2"/><path d="M31.8 152.0v4M36.2 152.0v4"/><circle cx="31.8" cy="150.0" r="2"/><circle cx="36.2" cy="150.0" r="2"/><path d="M56.9 156.5v4M61.3 156.5v4"/><circle cx="56.9" cy="154.5" r="2"/><circle cx="61.3" cy="154.5" r="2"/><path d="M83.1 154.3v4M87.5 154.3v4"/><circle cx="83.1" cy="152.3" r="2"/><circle cx="87.5" cy="152.3" r="2"/><path d="M115.2 162.1v4M119.6 162.1v4"/><circle cx="115.2" cy="160.1" r="2"/><circle cx="119.6" cy="160.1" r="2"/><path d="M137.4 157.6v4M141.8 157.6v4"/><circle cx="137.4" cy="155.6" r="2"/><circle cx="141.8" cy="155.6" r="2"/><path d="M158.8 158.2v4M163.2 158.2v4"/><circle cx="158.8" cy="156.2" r="2"/><circle cx="163.2" cy="156.2" r="2"/></g></pattern>
</defs><rect x="385" y="190" width="1535" height="808" fill="#aed19f"/><rect x="385" y="190" width="1535" height="808" fill="url(#trees)"/><polygon points="385,190 1420,190 1345,222 1235,262 1120,307 893,445 609,660 693,925 467,964 385,968" fill="#c1e531" stroke="#3a561e" stroke-width="1.3" stroke-linejoin="round" /><polygon points="508,190 601,299 690,377 747,385 806,345 825,302 788,228 735,190" fill="#aed19f" stroke="#3a561e" stroke-width="1.3" stroke-linejoin="round" /><polygon points="508,190 601,299 690,377 747,385 806,345 825,302 788,228 735,190" fill="url(#trees)" stroke="none" stroke-width="0" stroke-linejoin="round" /><polygon points="385,282 506,361 591,440 617,463 609,543 521,684 385,825" fill="#aed19f" stroke="#3a561e" stroke-width="1.3" stroke-linejoin="round" /><polygon points="385,282 506,361 591,440 617,463 609,543 521,684 385,825" fill="url(#trees)" stroke="none" stroke-width="0" stroke-linejoin="round" /><polygon points="1639,190 1736,190 1783,341 1779,450 1768,560 1766,622 1785,636 1883,732 1911,768 1909,803 1877,829 1702,862 1506,924 1455,894 1384,866 1269,866 1243,813 1400,745 1443,714 1620,575 1718,372" fill="#dba64c" stroke="#5d6b4a" stroke-width="1" stroke-linejoin="round" /><polygon points="1256,265 1345,232 1441,190 1633,190 1716,374 1684,440 1617,573 1440,711 1395,742 1457,619 1471,513 1458,407 1420,323 1349,278" fill="#c769c5" stroke="#5d6b4a" stroke-width="1" stroke-linejoin="round" /><polygon points="613,664 895,450 1122,313 1235,268 1256,265 1349,278 1420,323 1458,407 1471,513 1457,619 1395,742 1346,765 1242,812 1127,838 1034,805 900,760 720,800 662,815" fill="#ebe220" stroke="#5d6b4a" stroke-width="1" stroke-linejoin="round" /><polygon points="697,818 700,851 710,881 726,911 776,915 769,869 780,861 897,860 918,879 932,888 990,866 1029,859 1066,860 1117,838 1127,836 1248,813 1280,766 1170,725 1150,600 1050,600 969,657 915,686 839,721 783,740 747,755 731,718 697,805" fill="#1b5186" stroke="#1b5186" stroke-width="6.2" stroke-linejoin="round" /><polygon points="768,614 815,580 822,607 783,745 747,760 731,718" fill="#1b5186" stroke="#1b5186" stroke-width="6.2" stroke-linejoin="round" /><polygon points="940,443 969,447 944,560 917,680 839,721 882,560 888,539 912,536" fill="#1b5186" stroke="#1b5186" stroke-width="6.2" stroke-linejoin="round" /><polygon points="1089,371 1134,362 1084,532 1040,640 985,680 969,657 1017,594" fill="#1b5186" stroke="#1b5186" stroke-width="6.2" stroke-linejoin="round" /><polygon points="1267,315 1310,314 1270,453 1306,461 1390,343 1418,378 1327,511 1300,560 1150,600 1212,418 1229,399 1234,391" fill="#1b5186" stroke="#1b5186" stroke-width="6.2" stroke-linejoin="round" /><polygon points="1300,513 1433,513 1429,553 1300,555" fill="#1b5186" stroke="#1b5186" stroke-width="6.2" stroke-linejoin="round" /><polygon points="1274,624 1394,666 1376,708 1232,661" fill="#1b5186" stroke="#1b5186" stroke-width="6.2" stroke-linejoin="round" /><polygon points="1094,747 1059,738 1167,733 1278,766 1247,800" fill="#1b5186" stroke="#1b5186" stroke-width="6.2" stroke-linejoin="round" /><polygon points="697,818 700,851 710,881 726,911 776,915 769,869 780,861 897,860 918,879 932,888 990,866 1029,859 1066,860 1117,838 1127,836 1248,813 1280,766 1170,725 1150,600 1050,600 969,657 915,686 839,721 783,740 747,755 731,718 697,805" fill="#5fa2b1" stroke="none" stroke-width="0" stroke-linejoin="round" /><polygon points="768,614 815,580 822,607 783,745 747,760 731,718" fill="#5fa2b1" stroke="none" stroke-width="0" stroke-linejoin="round" /><polygon points="940,443 969,447 944,560 917,680 839,721 882,560 888,539 912,536" fill="#5fa2b1" stroke="none" stroke-width="0" stroke-linejoin="round" /><polygon points="1089,371 1134,362 1084,532 1040,640 985,680 969,657 1017,594" fill="#5fa2b1" stroke="none" stroke-width="0" stroke-linejoin="round" /><polygon points="1267,315 1310,314 1270,453 1306,461 1390,343 1418,378 1327,511 1300,560 1150,600 1212,418 1229,399 1234,391" fill="#5fa2b1" stroke="none" stroke-width="0" stroke-linejoin="round" /><polygon points="1300,513 1433,513 1429,553 1300,555" fill="#5fa2b1" stroke="none" stroke-width="0" stroke-linejoin="round" /><polygon points="1274,624 1394,666 1376,708 1232,661" fill="#5fa2b1" stroke="none" stroke-width="0" stroke-linejoin="round" /><polygon points="1094,747 1059,738 1167,733 1278,766 1247,800" fill="#5fa2b1" stroke="none" stroke-width="0" stroke-linejoin="round" /><polygon points="1034,805 1094,747 1247,797 1248,813 1127,836" fill="#ebe220" stroke="#1b5186" stroke-width="3.5" stroke-linejoin="round" /><polygon points="1212,420 1298,474 1341,537 1323,573 1202,690 1152,735 1059,738 1022,730 996,690 974,649 1000,612 1056,560 1148,467 1165,452" fill="#bfd657" stroke="none" stroke-width="0" stroke-linejoin="round" /><polygon points="1166,456 1212,421 1298,474 1341,537 1323,573 1202,690 1152,735 1059,738 1030,720 1012,614 1040,580 1092,537" fill="#a9c257" stroke="#96ad4c" stroke-width="1.5" stroke-linejoin="round" /><polygon points="1212,420 1298,474 1341,537 1323,573 1202,690 1152,735 1059,738 1022,730 996,690 974,649 1000,612 1056,560 1148,467 1165,452" fill="none" stroke="#d61fe0" stroke-width="3.8" stroke-linejoin="round" /><polygon points="1070,556 1097,553 1136,588 1163,590 1195,606 1210,626 1210,661 1187,685 1117,692 1081,672 1086,616 1065,591 1065,566" fill="#c6d75e" stroke="#c6d75e" stroke-width="13" stroke-linejoin="round" /><polygon points="1070,556 1097,553 1136,588 1163,590 1195,606 1210,626 1210,661 1187,685 1117,692 1081,672 1086,616 1065,591 1065,566" fill="#e7eeaa" stroke="#888" stroke-width="2.6" stroke-linejoin="round" /><polygon points="1070,556 1097,553 1136,588 1163,590 1195,606 1210,626 1210,661 1187,685 1117,692 1081,672 1086,616 1065,591 1065,566" fill="none" stroke="#fff" stroke-width="1.2" stroke-linejoin="round" /><polygon points="986,637 1011,622 1029,630 1036,649 1033,672 1017,684 996,680 985,663" fill="#c6d75e" stroke="#c6d75e" stroke-width="13" stroke-linejoin="round" /><polygon points="986,637 1011,622 1029,630 1036,649 1033,672 1017,684 996,680 985,663" fill="#e7eeaa" stroke="#888" stroke-width="2.6" stroke-linejoin="round" /><polygon points="986,637 1011,622 1029,630 1036,649 1033,672 1017,684 996,680 985,663" fill="none" stroke="#fff" stroke-width="1.2" stroke-linejoin="round" /><polygon points="659,743 668,716 703,711 722,723 736,740 736,758 715,779 691,784 669,771" fill="#dce8cd" stroke="#888" stroke-width="2.6" stroke-linejoin="round" /><polygon points="659,743 668,716 703,711 722,723 736,740 736,758 715,779 691,784 669,771" fill="none" stroke="#fff" stroke-width="1.2" stroke-linejoin="round" /><polygon points="708,811 733,847 798,821 932,728 932,713 922,703 907,700 861,715 808,745 743,776 708,803" fill="#bcd7e2" stroke="#888" stroke-width="2.6" stroke-linejoin="round" /><polygon points="708,811 733,847 798,821 932,728 932,713 922,703 907,700 861,715 808,745 743,776 708,803" fill="none" stroke="#fff" stroke-width="1.2" stroke-linejoin="round" /><polygon points="796,841 796,831 972,704 995,709 1017,748 1030,793 1031,846 994,862 957,868 907,864 821,856 798,849" fill="#3f9c5d" stroke="#2b7d22" stroke-width="2" stroke-linejoin="round" /><polygon points="773,869 786,861 897,865 918,879 923,889 919,897 856,908 803,915 783,912 774,874" fill="#dfe9d7" stroke="#888" stroke-width="2.6" stroke-linejoin="round" /><polygon points="773,869 786,861 897,865 918,879 923,889 919,897 856,908 803,915 783,912 774,874" fill="none" stroke="#fff" stroke-width="1.2" stroke-linejoin="round" /><rect x="385" y="190" width="1535" height="808" fill="url(#trees2)"/><polyline points="725,930 850,925 1000,895 1100,866 1200,836 1250,820 1440,750 1700,656 1925,560" fill="none" stroke="#d9dcc6" stroke-width="4.5" stroke-linejoin="round" stroke-linecap="round" opacity="0.45"/><polyline points="725,930 850,925 1000,895 1100,866 1200,836 1250,820 1440,750 1700,656 1925,560" fill="none" stroke="#f6e6e0" stroke-width="2.5" stroke-linejoin="round" stroke-linecap="round" stroke-dasharray="2 2" opacity="0.8"/><polyline points="723,927 740,950 770,997" fill="none" stroke="#f0dccb" stroke-width="3" stroke-linejoin="round" stroke-linecap="round" stroke-dasharray="3 2" opacity="0.85"/><polyline points="452,999 478,974 498,961" fill="none" stroke="#b9d6e6" stroke-width="4" stroke-linejoin="round" stroke-linecap="round" opacity="0.8"/><polyline points="500,958 560,905 650,822" fill="none" stroke="#d3ea9a" stroke-width="3" stroke-linejoin="round" stroke-linecap="round" opacity="0.3"/><text x="968" y="898" font-size="11.5" fill="#6a7070" text-anchor="middle" transform="rotate(-14 968 898)" letter-spacing="0.3">Rundweg "Bannwald" Waldmoor-Torfstich</text><text x="1512" y="721" font-size="11.5" fill="#a8704e" text-anchor="middle" transform="rotate(-21 1512 721)" letter-spacing="0.3">Rundweg "Bannwald" Waldmoor-Torfstich</text><polyline points="385,846 426,815 658,560 743,470 967,254 1104,336 1476,190" fill="none" stroke="#0f6b1c" stroke-width="4.6" stroke-linejoin="round" stroke-linecap="round" /><polyline points="385,976 515,975 905,932 1165,875 1579,849 1746,795 1785,341 1739,190" fill="none" stroke="#0f6b1c" stroke-width="4.6" stroke-linejoin="round" stroke-linecap="round" /><polyline points="1246,190 1238,330 949,635 776,740 753,752 684,810 713,925 849,917 983,889 1117,845 1217,811 1345,768 1440,734 1925,551" fill="none" stroke="#000" stroke-width="4.5" stroke-linejoin="round" stroke-linecap="round" /><polygon points="897.0,820.2 897.89,822.56 900.09,821.32 899.25,823.7 901.73,824.17 899.56,825.45 901.16,827.4 898.67,826.99 898.64,829.51 897.0,827.6 895.36,829.51 895.33,826.99 892.84,827.4 894.44,825.45 892.27,824.17 894.75,823.7 893.91,821.32 896.11,822.56" fill="#e8141c" stroke="none" stroke-width="0" stroke-linejoin="round" /><polygon points="911.0,817.2 911.89,819.56 914.09,818.32 913.25,820.7 915.73,821.17 913.56,822.45 915.16,824.4 912.67,823.99 912.64,826.51 911.0,824.6 909.36,826.51 909.33,823.99 906.84,824.4 908.44,822.45 906.27,821.17 908.75,820.7 907.91,818.32 910.11,819.56" fill="#e8141c" stroke="none" stroke-width="0" stroke-linejoin="round" /><polygon points="918.0,825.2 918.89,827.56 921.09,826.32 920.25,828.7 922.73,829.17 920.56,830.45 922.16,832.4 919.67,831.99 919.64,834.51 918.0,832.6 916.36,834.51 916.33,831.99 913.84,832.4 915.44,830.45 913.27,829.17 915.75,828.7 914.91,826.32 917.11,827.56" fill="#e8141c" stroke="none" stroke-width="0" stroke-linejoin="round" /><polygon points="898.0,829.2 898.89,831.56 901.09,830.32 900.25,832.7 902.73,833.17 900.56,834.45 902.16,836.4 899.67,835.99 899.64,838.51 898.0,836.6 896.36,838.51 896.33,835.99 893.84,836.4 895.44,834.45 893.27,833.17 895.75,832.7 894.91,830.32 897.11,831.56" fill="#e8141c" stroke="none" stroke-width="0" stroke-linejoin="round" /><polygon points="909.0,832.2 909.89,834.56 912.09,833.32 911.25,835.7 913.73,836.17 911.56,837.45 913.16,839.4 910.67,838.99 910.64,841.51 909.0,839.6 907.36,841.51 907.33,838.99 904.84,839.4 906.44,837.45 904.27,836.17 906.75,835.7 905.91,833.32 908.11,834.56" fill="#e8141c" stroke="none" stroke-width="0" stroke-linejoin="round" /><polygon points="899.0,836.2 899.89,838.56 902.09,837.32 901.25,839.7 903.73,840.17 901.56,841.45 903.16,843.4 900.67,842.99 900.64,845.51 899.0,843.6 897.36,845.51 897.33,842.99 894.84,843.4 896.44,841.45 894.27,840.17 896.75,839.7 895.91,837.32 898.11,838.56" fill="#e8141c" stroke="none" stroke-width="0" stroke-linejoin="round" /><polygon points="919.0,836.2 919.89,838.56 922.09,837.32 921.25,839.7 923.73,840.17 921.56,841.45 923.16,843.4 920.67,842.99 920.64,845.51 919.0,843.6 917.36,845.51 917.33,842.99 914.84,843.4 916.44,841.45 914.27,840.17 916.75,839.7 915.91,837.32 918.11,838.56" fill="#e8141c" stroke="none" stroke-width="0" stroke-linejoin="round" /><polygon points="834.0,862.2 834.89,864.56 837.09,863.32 836.25,865.7 838.73,866.17 836.56,867.45 838.16,869.4 835.67,868.99 835.64,871.51 834.0,869.6 832.36,871.51 832.33,868.99 829.84,869.4 831.44,867.45 829.27,866.17 831.75,865.7 830.91,863.32 833.11,864.56" fill="#e8141c" stroke="none" stroke-width="0" stroke-linejoin="round" /><polygon points="845.0,866.2 845.89,868.56 848.09,867.32 847.25,869.7 849.73,870.17 847.56,871.45 849.16,873.4 846.67,872.99 846.64,875.51 845.0,873.6 843.36,875.51 843.33,872.99 840.84,873.4 842.44,871.45 840.27,870.17 842.75,869.7 841.91,867.32 844.11,868.56" fill="#e8141c" stroke="none" stroke-width="0" stroke-linejoin="round" /><polygon points="853.0,863.2 853.89,865.56 856.09,864.32 855.25,866.7 857.73,867.17 855.56,868.45 857.16,870.4 854.67,869.99 854.64,872.51 853.0,870.6 851.36,872.51 851.33,869.99 848.84,870.4 850.44,868.45 848.27,867.17 850.75,866.7 849.91,864.32 852.11,865.56" fill="#e8141c" stroke="none" stroke-width="0" stroke-linejoin="round" /><polygon points="869.0,863.2 869.89,865.56 872.09,864.32 871.25,866.7 873.73,867.17 871.56,868.45 873.16,870.4 870.67,869.99 870.64,872.51 869.0,870.6 867.36,872.51 867.33,869.99 864.84,870.4 866.44,868.45 864.27,867.17 866.75,866.7 865.91,864.32 868.11,865.56" fill="#e8141c" stroke="none" stroke-width="0" stroke-linejoin="round" /><polygon points="884.0,862.2 884.89,864.56 887.09,863.32 886.25,865.7 888.73,866.17 886.56,867.45 888.16,869.4 885.67,868.99 885.64,871.51 884.0,869.6 882.36,871.51 882.33,868.99 879.84,869.4 881.44,867.45 879.27,866.17 881.75,865.7 880.91,863.32 883.11,864.56" fill="#e8141c" stroke="none" stroke-width="0" stroke-linejoin="round" /><polygon points="856.0,872.2 856.89,874.56 859.09,873.32 858.25,875.7 860.73,876.17 858.56,877.45 860.16,879.4 857.67,878.99 857.64,881.51 856.0,879.6 854.36,881.51 854.33,878.99 851.84,879.4 853.44,877.45 851.27,876.17 853.75,875.7 852.91,873.32 855.11,874.56" fill="#e8141c" stroke="none" stroke-width="0" stroke-linejoin="round" /><polygon points="870.0,872.2 870.89,874.56 873.09,873.32 872.25,875.7 874.73,876.17 872.56,877.45 874.16,879.4 871.67,878.99 871.64,881.51 870.0,879.6 868.36,881.51 868.33,878.99 865.84,879.4 867.44,877.45 865.27,876.17 867.75,875.7 866.91,873.32 869.11,874.56" fill="#e8141c" stroke="none" stroke-width="0" stroke-linejoin="round" /><polygon points="896.0,869.2 896.89,871.56 899.09,870.32 898.25,872.7 900.73,873.17 898.56,874.45 900.16,876.4 897.67,875.99 897.64,878.51 896.0,876.6 894.36,878.51 894.33,875.99 891.84,876.4 893.44,874.45 891.27,873.17 893.75,872.7 892.91,870.32 895.11,871.56" fill="#e8141c" stroke="none" stroke-width="0" stroke-linejoin="round" /><polygon points="842.0,877.2 842.89,879.56 845.09,878.32 844.25,880.7 846.73,881.17 844.56,882.45 846.16,884.4 843.67,883.99 843.64,886.51 842.0,884.6 840.36,886.51 840.33,883.99 837.84,884.4 839.44,882.45 837.27,881.17 839.75,880.7 838.91,878.32 841.11,879.56" fill="#e8141c" stroke="none" stroke-width="0" stroke-linejoin="round" /><polygon points="864.0,881.2 864.89,883.56 867.09,882.32 866.25,884.7 868.73,885.17 866.56,886.45 868.16,888.4 865.67,887.99 865.64,890.51 864.0,888.6 862.36,890.51 862.33,887.99 859.84,888.4 861.44,886.45 859.27,885.17 861.75,884.7 860.91,882.32 863.11,883.56" fill="#e8141c" stroke="none" stroke-width="0" stroke-linejoin="round" /><polygon points="883.0,878.2 883.89,880.56 886.09,879.32 885.25,881.7 887.73,882.17 885.56,883.45 887.16,885.4 884.67,884.99 884.64,887.51 883.0,885.6 881.36,887.51 881.33,884.99 878.84,885.4 880.44,883.45 878.27,882.17 880.75,881.7 879.91,879.32 882.11,880.56" fill="#e8141c" stroke="none" stroke-width="0" stroke-linejoin="round" /><circle cx="1239" cy="236" r="7.2" fill="#fff" stroke="#000" stroke-width="1.2"/><circle cx="1239" cy="236" r="2.5" fill="#000"/><circle cx="1338" cy="305" r="7.2" fill="#fff" stroke="#000" stroke-width="1.2"/><circle cx="1338" cy="305" r="2.5" fill="#000"/><circle cx="1275" cy="318" r="7.2" fill="#fff" stroke="#000" stroke-width="1.2"/><circle cx="1275" cy="318" r="2.5" fill="#000"/><circle cx="1139" cy="448" r="7.2" fill="#fff" stroke="#000" stroke-width="1.2"/><circle cx="1139" cy="448" r="2.5" fill="#000"/><circle cx="1137" cy="474" r="7.2" fill="#fff" stroke="#000" stroke-width="1.2"/><circle cx="1137" cy="474" r="2.5" fill="#000"/><circle cx="1155" cy="474" r="7.2" fill="#fff" stroke="#000" stroke-width="1.2"/><circle cx="1155" cy="474" r="2.5" fill="#000"/><circle cx="1582" cy="517" r="7.2" fill="#fff" stroke="#000" stroke-width="1.2"/><circle cx="1582" cy="517" r="2.5" fill="#000"/><circle cx="1580" cy="609" r="7.2" fill="#fff" stroke="#000" stroke-width="1.2"/><circle cx="1580" cy="609" r="2.5" fill="#000"/><circle cx="1646" cy="595" r="7.2" fill="#fff" stroke="#000" stroke-width="1.2"/><circle cx="1646" cy="595" r="2.5" fill="#000"/><circle cx="1616" cy="639" r="7.2" fill="#fff" stroke="#000" stroke-width="1.2"/><circle cx="1616" cy="639" r="2.5" fill="#000"/><circle cx="1657" cy="655" r="7.2" fill="#fff" stroke="#000" stroke-width="1.2"/><circle cx="1657" cy="655" r="2.5" fill="#000"/><circle cx="1686" cy="655" r="7.2" fill="#fff" stroke="#000" stroke-width="1.2"/><circle cx="1686" cy="655" r="2.5" fill="#000"/><circle cx="1730" cy="635" r="7.2" fill="#fff" stroke="#000" stroke-width="1.2"/><circle cx="1730" cy="635" r="2.5" fill="#000"/><circle cx="1756" cy="633" r="7.2" fill="#fff" stroke="#000" stroke-width="1.2"/><circle cx="1756" cy="633" r="2.5" fill="#000"/><circle cx="1786" cy="630" r="7.2" fill="#fff" stroke="#000" stroke-width="1.2"/><circle cx="1786" cy="630" r="2.5" fill="#000"/><circle cx="1904" cy="591" r="7.2" fill="#fff" stroke="#000" stroke-width="1.2"/><circle cx="1904" cy="591" r="2.5" fill="#000"/><circle cx="1621" cy="668" r="7.2" fill="#fff" stroke="#000" stroke-width="1.2"/><circle cx="1621" cy="668" r="2.5" fill="#000"/><circle cx="1595" cy="673" r="7.2" fill="#fff" stroke="#000" stroke-width="1.2"/><circle cx="1595" cy="673" r="2.5" fill="#000"/><circle cx="1596" cy="697" r="7.2" fill="#fff" stroke="#000" stroke-width="1.2"/><circle cx="1596" cy="697" r="2.5" fill="#000"/><circle cx="1547" cy="710" r="7.2" fill="#fff" stroke="#000" stroke-width="1.2"/><circle cx="1547" cy="710" r="2.5" fill="#000"/><circle cx="1538" cy="732" r="7.2" fill="#fff" stroke="#000" stroke-width="1.2"/><circle cx="1538" cy="732" r="2.5" fill="#000"/><circle cx="1458" cy="727" r="7.2" fill="#fff" stroke="#000" stroke-width="1.2"/><circle cx="1458" cy="727" r="2.5" fill="#000"/><circle cx="1229" cy="790" r="7.2" fill="#fff" stroke="#000" stroke-width="1.2"/><circle cx="1229" cy="790" r="2.5" fill="#000"/><circle cx="1245" cy="803" r="7.2" fill="#fff" stroke="#000" stroke-width="1.2"/><circle cx="1245" cy="803" r="2.5" fill="#000"/><circle cx="1297" cy="801" r="7.2" fill="#fff" stroke="#000" stroke-width="1.2"/><circle cx="1297" cy="801" r="2.5" fill="#000"/><circle cx="1339" cy="772" r="7.2" fill="#fff" stroke="#000" stroke-width="1.2"/><circle cx="1339" cy="772" r="2.5" fill="#000"/><circle cx="1420" cy="757" r="7.2" fill="#fff" stroke="#000" stroke-width="1.2"/><circle cx="1420" cy="757" r="2.5" fill="#000"/><circle cx="1417" cy="772" r="7.2" fill="#fff" stroke="#000" stroke-width="1.2"/><circle cx="1417" cy="772" r="2.5" fill="#000"/><circle cx="989" cy="608" r="7.2" fill="#fff" stroke="#000" stroke-width="1.2"/><circle cx="989" cy="608" r="2.5" fill="#000"/><circle cx="1095" cy="584" r="7.2" fill="#fff" stroke="#000" stroke-width="1.2"/><circle cx="1095" cy="584" r="2.5" fill="#000"/><circle cx="1091" cy="601" r="7.2" fill="#fff" stroke="#000" stroke-width="1.2"/><circle cx="1091" cy="601" r="2.5" fill="#000"/><circle cx="1011" cy="656" r="7.2" fill="#fff" stroke="#000" stroke-width="1.2"/><circle cx="1011" cy="656" r="2.5" fill="#000"/><circle cx="872" cy="704" r="7.2" fill="#fff" stroke="#000" stroke-width="1.2"/><circle cx="872" cy="704" r="2.5" fill="#000"/><circle cx="759" cy="738" r="7.2" fill="#fff" stroke="#000" stroke-width="1.2"/><circle cx="759" cy="738" r="2.5" fill="#000"/><circle cx="761" cy="764" r="7.2" fill="#fff" stroke="#000" stroke-width="1.2"/><circle cx="761" cy="764" r="2.5" fill="#000"/><circle cx="753" cy="772" r="7.2" fill="#fff" stroke="#000" stroke-width="1.2"/><circle cx="753" cy="772" r="2.5" fill="#000"/><circle cx="701" cy="803" r="7.2" fill="#fff" stroke="#000" stroke-width="1.2"/><circle cx="701" cy="803" r="2.5" fill="#000"/><circle cx="858" cy="768" r="7.2" fill="#fff" stroke="#000" stroke-width="1.2"/><circle cx="858" cy="768" r="2.5" fill="#000"/><circle cx="1024" cy="807" r="7.2" fill="#fff" stroke="#000" stroke-width="1.2"/><circle cx="1024" cy="807" r="2.5" fill="#000"/><circle cx="906" cy="828" r="7.2" fill="#fff" stroke="#000" stroke-width="1.2"/><circle cx="906" cy="828" r="2.5" fill="#000"/><circle cx="802" cy="857" r="7.2" fill="#fff" stroke="#000" stroke-width="1.2"/><circle cx="802" cy="857" r="2.5" fill="#000"/><circle cx="901" cy="861" r="7.2" fill="#fff" stroke="#000" stroke-width="1.2"/><circle cx="901" cy="861" r="2.5" fill="#000"/><circle cx="912" cy="875" r="7.2" fill="#fff" stroke="#000" stroke-width="1.2"/><circle cx="912" cy="875" r="2.5" fill="#000"/><circle cx="751" cy="872" r="7.2" fill="#fff" stroke="#000" stroke-width="1.2"/><circle cx="751" cy="872" r="2.5" fill="#000"/><circle cx="779" cy="887" r="7.2" fill="#fff" stroke="#000" stroke-width="1.2"/><circle cx="779" cy="887" r="2.5" fill="#000"/><circle cx="876" cy="895" r="7.2" fill="#fff" stroke="#000" stroke-width="1.2"/><circle cx="876" cy="895" r="2.5" fill="#000"/><circle cx="864" cy="904" r="7.2" fill="#fff" stroke="#000" stroke-width="1.2"/><circle cx="864" cy="904" r="2.5" fill="#000"/><circle cx="802" cy="917" r="7.2" fill="#fff" stroke="#000" stroke-width="1.2"/><circle cx="802" cy="917" r="2.5" fill="#000"/><circle cx="746" cy="925" r="7.2" fill="#fff" stroke="#000" stroke-width="1.2"/><circle cx="746" cy="925" r="2.5" fill="#000"/><circle cx="1008" cy="874" r="7.2" fill="#fff" stroke="#000" stroke-width="1.2"/><circle cx="1008" cy="874" r="2.5" fill="#000"/><circle cx="1012" cy="902" r="7.2" fill="#fff" stroke="#000" stroke-width="1.2"/><circle cx="1012" cy="902" r="2.5" fill="#000"/><circle cx="1088" cy="852" r="7.2" fill="#fff" stroke="#000" stroke-width="1.2"/><circle cx="1088" cy="852" r="2.5" fill="#000"/><circle cx="1127" cy="842" r="7.2" fill="#fff" stroke="#000" stroke-width="1.2"/><circle cx="1127" cy="842" r="2.5" fill="#000"/><circle cx="888" cy="930" r="7.2" fill="#fff" stroke="#000" stroke-width="1.2"/><circle cx="888" cy="930" r="2.5" fill="#000"/><circle cx="963" cy="928" r="7.2" fill="#fff" stroke="#000" stroke-width="1.2"/><circle cx="963" cy="928" r="2.5" fill="#000"/><circle cx="716" cy="955" r="7.2" fill="#fff" stroke="#000" stroke-width="1.2"/><circle cx="716" cy="955" r="2.5" fill="#000"/><circle cx="1059" cy="891" r="7.2" fill="#fff" stroke="#000" stroke-width="1.2"/><circle cx="1059" cy="891" r="2.5" fill="#000"/><rect x="1135" y="480" width="14" height="14" fill="#fff" stroke="#777" stroke-width="1"/><path d="M1137 491l3-5 2 3 2-2 3 4z" fill="#6a6a9a"/><circle cx="1142" cy="484" r="1.2" fill="#6a6a9a"/><rect x="1117" y="504" width="14" height="14" fill="#fff" stroke="#777" stroke-width="1"/><path d="M1119 515l3-5 2 3 2-2 3 4z" fill="#6a6a9a"/><circle cx="1124" cy="508" r="1.2" fill="#6a6a9a"/><text x="749" y="490" font-size="16.5" text-anchor="middle" dominant-baseline="central">mis</text><text x="841" y="535" font-size="16.5" text-anchor="middle" dominant-baseline="central">vph</text><text x="1551" y="381" font-size="16.5" text-anchor="middle" dominant-baseline="central">vpm</text><text x="884" y="618" font-size="16" text-anchor="middle" dominant-baseline="central" transform="rotate(-75 884 618)">vps</text><text x="1023" y="643" font-size="16.5" text-anchor="middle" dominant-baseline="central">ev3</text><text x="1149" y="619" font-size="16.5" text-anchor="middle" dominant-baseline="central">ev4</text><text x="1059" y="701" font-size="16.5" text-anchor="middle" dominant-baseline="central">vpd</text><text x="713" y="735" font-size="16.5" text-anchor="middle" dominant-baseline="central">evm</text><text x="828" y="762" font-size="16.5" text-anchor="middle" dominant-baseline="central">vpn</text><text x="947" y="791" font-size="16.5" text-anchor="middle" dominant-baseline="central">vpb</text><text x="817" y="884" font-size="16.5" text-anchor="middle" dominant-baseline="central">sma</text><text x="1646" y="667" font-size="16.5" text-anchor="middle" dominant-baseline="central">vab</text><text x="1068" y="885" font-size="17" text-anchor="middle" dominant-baseline="central" transform="rotate(-14 1068 885)">nsg 1937</text><rect x="1029" y="936" width="155" height="44" fill="#ffff00" stroke="#000" stroke-width="1.8"/><text x="1104" y="956.5" font-size="20" font-weight="bold" text-anchor="middle" dominant-baseline="central">Bild 6</text></svg>
</div>

<!-- status bar -->
<div id="status" class="a" style="left:2px;top:998px;width:1916px;height:31px;background:#f0f0f0">
</div>
<div class="a" style="left:4px;top:1003px;width:279px;height:22px;background:#fff;border:1px solid #7a7a7a"></div><svg class="a" style="left:12px;top:1007px" width="14" height="14"><circle cx="6" cy="6" r="4.2" fill="none" stroke="#777" stroke-width="1.4"/><path d="M9 9l4 4" stroke="#777" stroke-width="1.6"/></svg><div class="a" style="left:33px;top:1006px;font-size:13px;white-space:nowrap;color:#777">Zu suchender Typ (Strg+K)</div><div class="a" style="left:909px;top:1006px;font-size:13px;white-space:nowrap;color:#111">Koordinate</div><div class="a" style="left:974px;top:1003px;width:146px;height:22px;background:#fff;border:1px solid #7a7a7a"></div><div class="a" style="left:988px;top:1006px;font-size:13px;white-space:nowrap;color:#111">473493.9,5397485.5</div><svg class="a" style="left:1124px;top:1004px" width="20" height="20"><ellipse cx="9" cy="10" rx="5.5" ry="7" fill="#ccc" stroke="#111" stroke-width="1.6" transform="rotate(-30 9 10)"/><circle cx="11" cy="14" r="3" fill="#fff" stroke="#111"/><path d="M15 3l3-1M16 6l3 0" stroke="#111"/></svg><div class="a" style="left:1157px;top:1006px;font-size:13px;white-space:nowrap;color:#111">Maßstab</div><div class="a" style="left:1208px;top:1003px;width:90px;height:22px;background:#fff;border:1px solid #7a7a7a"></div><div class="a" style="left:1213px;top:1006px;font-size:13px;white-space:nowrap;color:#111">1:2000</div><svg class="a" style="left:1281px;top:1010px" width="12" height="8"><path d="M1 1.5l5 5 5-5" fill="none" stroke="#333" stroke-width="1.2"/></svg><svg class="a" style="left:1309px;top:1004px" width="18" height="20"><path d="M4.5 9V6a4.5 4.5 0 0 1 9 0v3" fill="none" stroke="#777" stroke-width="2.2"/><rect x="2" y="9" width="14" height="10" rx="1.5" fill="#777"/></svg><div class="a" style="left:1335px;top:1006px;font-size:13px;white-space:nowrap;color:#111">Vergrößerung</div><div class="a" style="left:1418px;top:1003px;width:85px;height:22px;background:#fff;border:1px solid #7a7a7a"></div><div class="a" style="left:1421px;top:1006px;font-size:13px;white-space:nowrap;color:#111">100%</div><svg class="a" style="left:1488px;top:1005px" width="12" height="18"><path d="M2 7l4-4 4 4zM2 11l4 4 4-4z" fill="#222"/></svg><div class="a" style="left:1513px;top:1006px;font-size:13px;white-space:nowrap;color:#111">Drehung</div><div class="a" style="left:1570px;top:1003px;width:85px;height:22px;background:#fff;border:1px solid #7a7a7a"></div><div class="a" style="left:1573px;top:1006px;font-size:13px;white-space:nowrap;color:#111">0,0 °</div><svg class="a" style="left:1640px;top:1005px" width="12" height="18"><path d="M2 7l4-4 4 4zM2 11l4 4 4-4z" fill="#222"/></svg><div class="a" style="left:1661px;top:1005px;width:17px;height:17px;border:1px solid #333;background:#fff"></div><svg class="a" style="left:1661px;top:1005px" width="17" height="17"><path d="M3.5 9l3.5 3.5 6.5-8" fill="none" stroke="#333" stroke-width="1.3"/></svg><div class="a" style="left:1683px;top:1006px;font-size:13px;white-space:nowrap;color:#111">Zeichnen</div><svg class="a" style="left:1750px;top:1004px" width="22" height="20"><circle cx="11" cy="10" r="8" fill="none" stroke="#666" stroke-width="1.3"/><path d="M3 10h16M11 2v16M5 5c4 3 8 3 12 0M5 15c4-3 8-3 12 0" fill="none" stroke="#666" stroke-width="1.1"/></svg><div class="a" style="left:1775px;top:1006px;font-size:13.6px;white-space:nowrap;color:#111">EPSG:25832</div><svg class="a" style="left:1862px;top:1004px" width="22" height="22"><ellipse cx="10.5" cy="9.5" rx="9.5" ry="8" fill="#666"/><path d="M13 15l5 5-8-4z" fill="#666"/><circle cx="6" cy="9.5" r="1.5" fill="#fff"/><circle cx="10.5" cy="9.5" r="1.5" fill="#fff"/><circle cx="15" cy="9.5" r="1.5" fill="#fff"/></svg><svg class="a" style="left:1895px;top:1004px" width="22" height="22"><path d="M2 4h5c0-3 4-3 4 0h5v6c3 0 3 4 0 4v6H2z" fill="#c8c8c8" stroke="#666" stroke-width="1.2"/><path d="M2 20L16 6" stroke="#666"/></svg>
</body></html>
